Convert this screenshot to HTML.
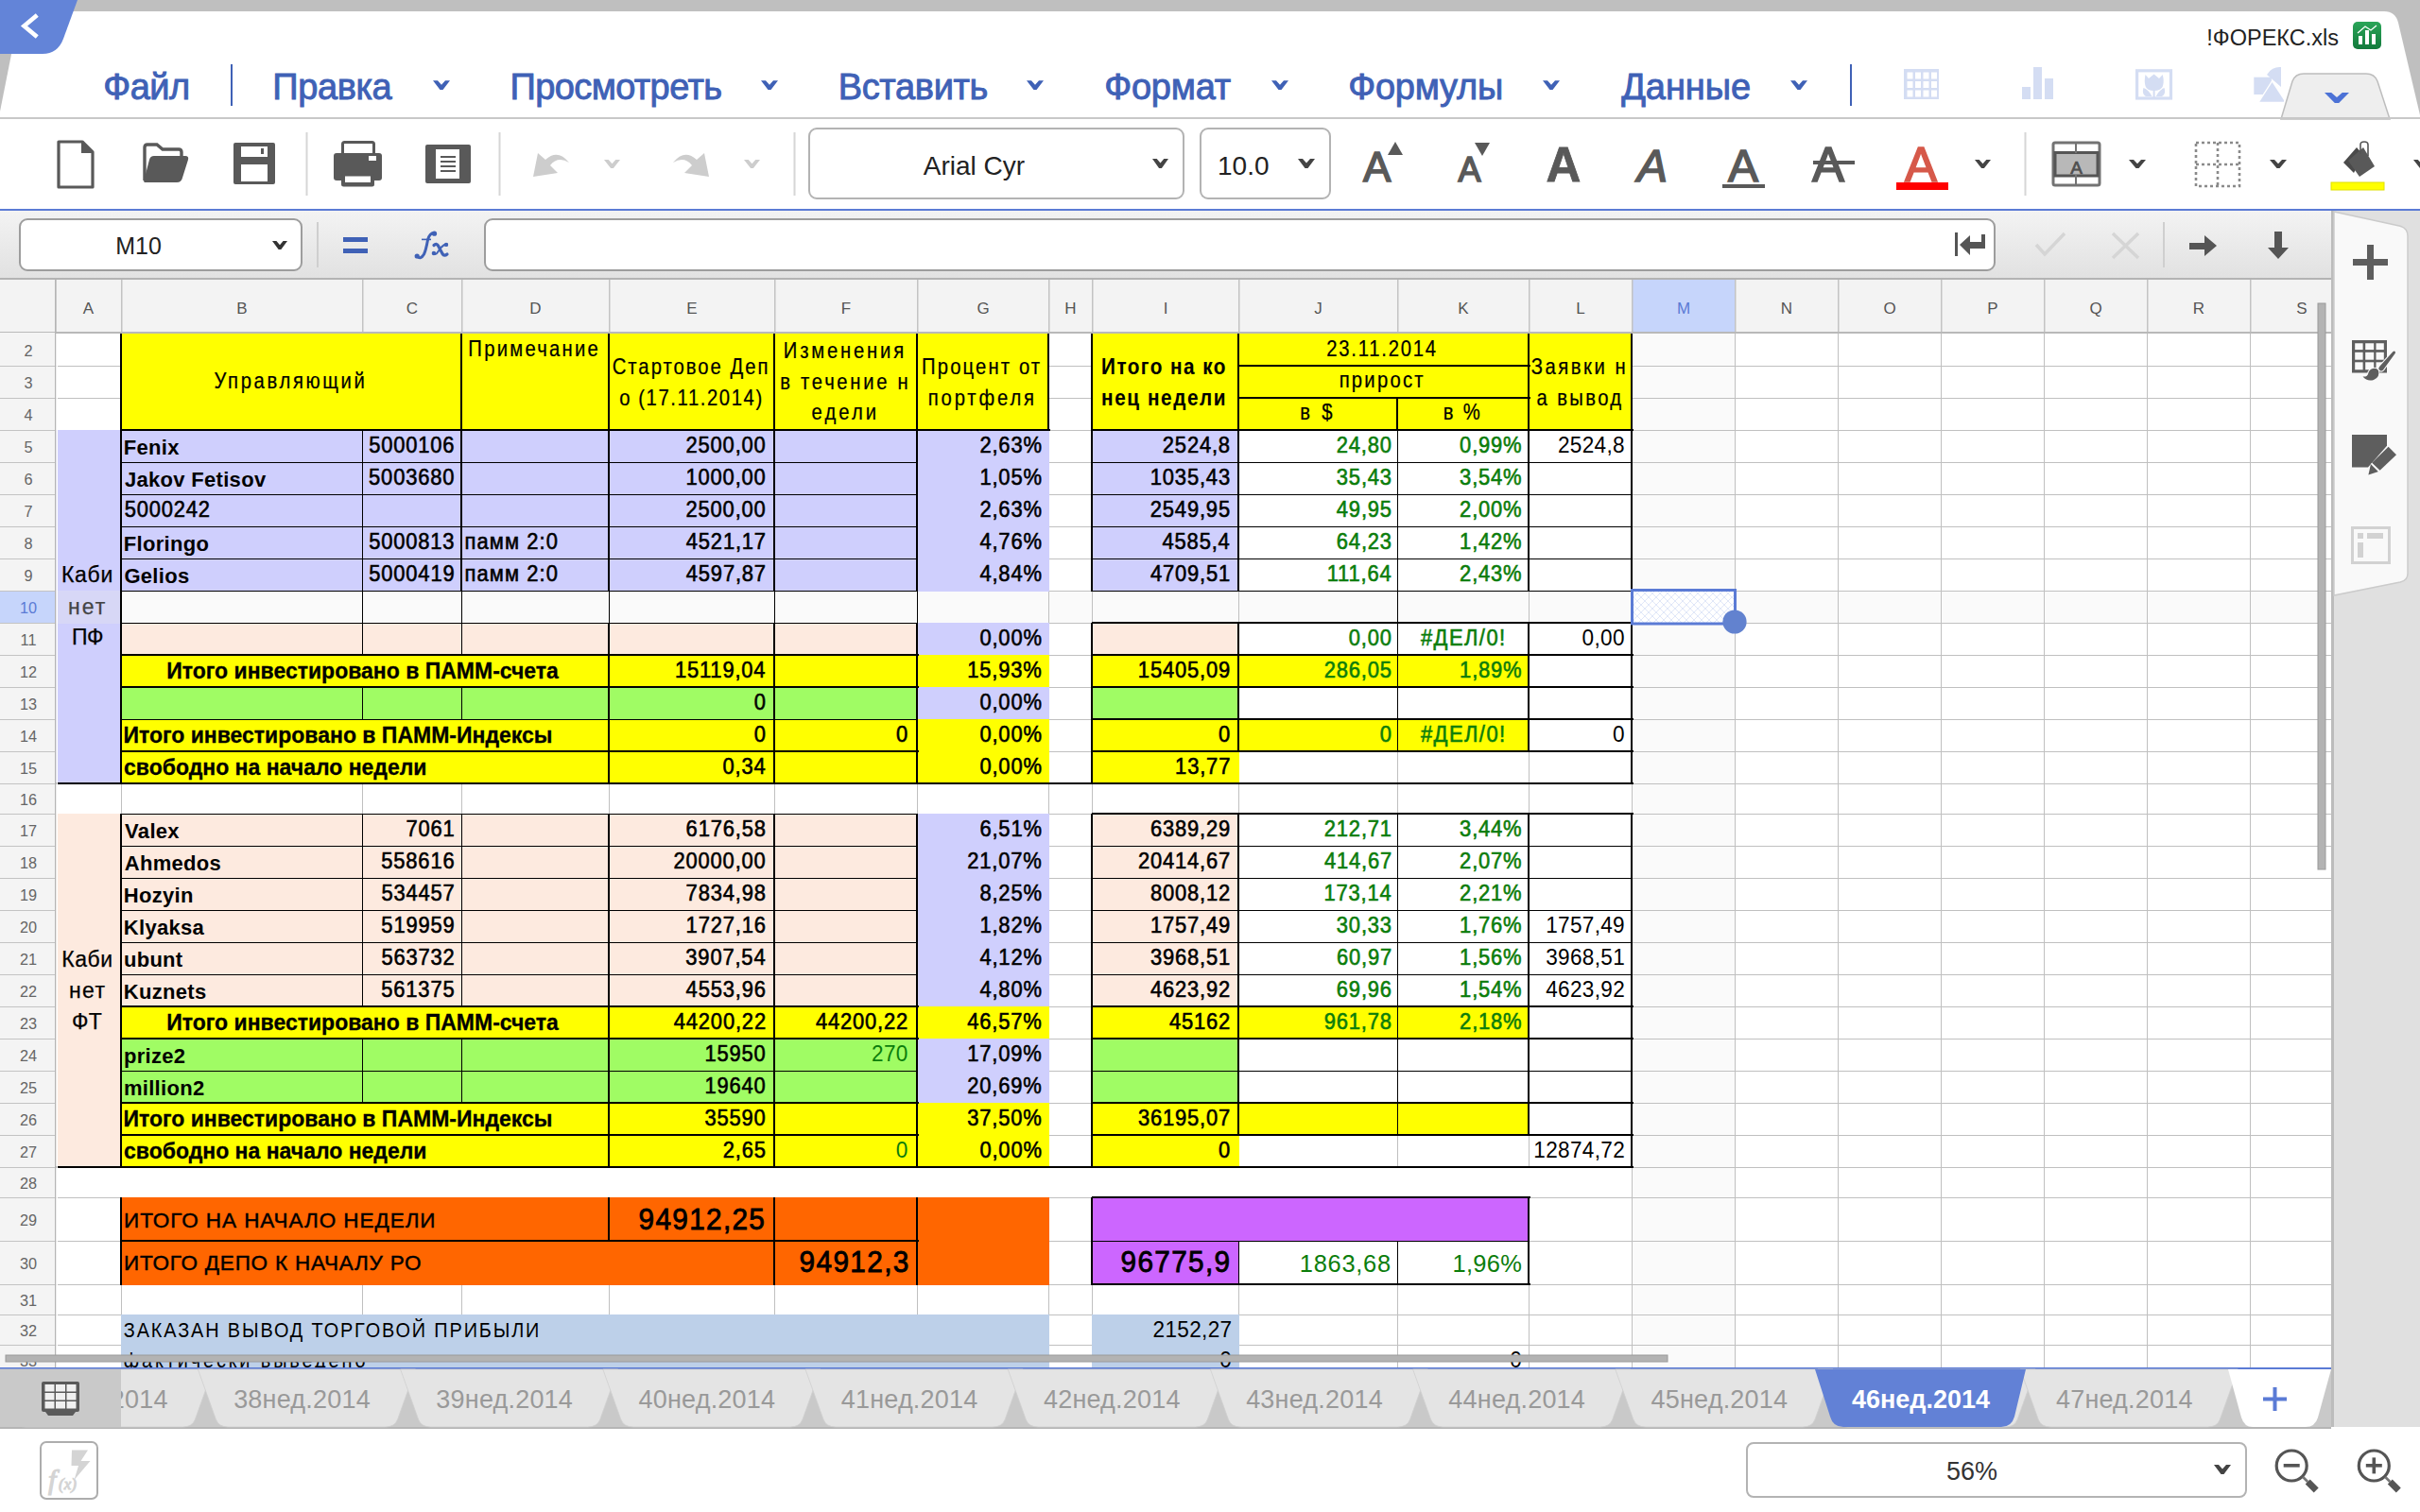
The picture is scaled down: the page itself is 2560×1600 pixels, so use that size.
<!DOCTYPE html><html><head><meta charset="utf-8"><style>html,body{margin:0;padding:0;width:2560px;height:1600px;overflow:hidden;background:#fff}svg{display:block}text{white-space:pre}</style></head><body>
<svg width="2560" height="1600" viewBox="0 0 2560 1600">
<rect x="0" y="0" width="2560" height="126" fill="#bfbfbf"/>
<path d="M21,12 L2522,12 Q2534,12 2537,24 L2561,126 L0,126 L0,118 Z" fill="#ffffff"/>
<path d="M0,0 L82,0 L67,41 Q61,57 45,57 L0,57 Z" fill="#6384d8"/>
<polyline points="37.5,17.5 25.5,27.5 37.5,37.5" fill="none" stroke="#fff" stroke-width="4.6" stroke-linecap="square"/>
<text x="2474" y="48" font-family='"Liberation Sans", sans-serif' font-size="23.5" fill="#222" font-weight="400" letter-spacing="0" text-anchor="end" font-style="normal" >!ФОРЕКС.xls</text>
<defs><linearGradient id="gx" x1="0" y1="0" x2="0" y2="1"><stop offset="0" stop-color="#2aa558"/><stop offset="1" stop-color="#137a3c"/></linearGradient></defs>
<rect x="2489" y="23" width="30" height="29" rx="5" fill="url(#gx)"/>
<rect x="2495" y="38" width="4" height="9" fill="#fff"/><rect x="2502" y="32" width="4" height="15" fill="#fff"/><rect x="2509" y="36" width="4" height="11" fill="#fff"/>
<polyline points="2494,35 2502,28 2508,32 2514,27" fill="none" stroke="#fff" stroke-width="1.3"/>
<text transform="translate(109.25,104.60)" font-family='"Liberation Sans", sans-serif' font-size="38" font-weight="400" font-style="normal" letter-spacing="-0.500" fill="#3f61b6" stroke="#3f61b6" stroke-width="0.9" >Файл</text>
<text transform="translate(288.35,104.60)" font-family='"Liberation Sans", sans-serif' font-size="38" font-weight="400" font-style="normal" letter-spacing="-0.420" fill="#3f61b6" stroke="#3f61b6" stroke-width="0.9" >Правка</text>
<polygon points="458.00,85.20 463.00,85.20 467.00,89.71 471.00,85.20 476.00,85.20 468.50,95.00 465.50,95.00" fill="#3f61b6"/>
<text transform="translate(539.55,104.60)" font-family='"Liberation Sans", sans-serif' font-size="38" font-weight="400" font-style="normal" letter-spacing="-0.620" fill="#3f61b6" stroke="#3f61b6" stroke-width="0.9" >Просмотреть</text>
<polygon points="805.00,85.20 810.00,85.20 814.00,89.71 818.00,85.20 823.00,85.20 815.50,95.00 812.50,95.00" fill="#3f61b6"/>
<text transform="translate(886.65,104.60)" font-family='"Liberation Sans", sans-serif' font-size="38" font-weight="400" font-style="normal" letter-spacing="-0.329" fill="#3f61b6" stroke="#3f61b6" stroke-width="0.9" >Вставить</text>
<polygon points="1086.00,85.20 1091.00,85.20 1095.00,89.71 1099.00,85.20 1104.00,85.20 1096.50,95.00 1093.50,95.00" fill="#3f61b6"/>
<text transform="translate(1168.25,104.60)" font-family='"Liberation Sans", sans-serif' font-size="38" font-weight="400" font-style="normal" letter-spacing="-0.220" fill="#3f61b6" stroke="#3f61b6" stroke-width="0.9" >Формат</text>
<polygon points="1345.00,85.20 1350.00,85.20 1354.00,89.71 1358.00,85.20 1363.00,85.20 1355.50,95.00 1352.50,95.00" fill="#3f61b6"/>
<text transform="translate(1426.25,104.60)" font-family='"Liberation Sans", sans-serif' font-size="38" font-weight="400" font-style="normal" letter-spacing="-0.233" fill="#3f61b6" stroke="#3f61b6" stroke-width="0.9" >Формулы</text>
<polygon points="1632.00,85.20 1637.00,85.20 1641.00,89.71 1645.00,85.20 1650.00,85.20 1642.50,95.00 1639.50,95.00" fill="#3f61b6"/>
<text transform="translate(1715.15,104.60)" font-family='"Liberation Sans", sans-serif' font-size="38" font-weight="400" font-style="normal" letter-spacing="-0.060" fill="#3f61b6" stroke="#3f61b6" stroke-width="0.9" >Данные</text>
<polygon points="1894.00,85.20 1899.00,85.20 1903.00,89.71 1907.00,85.20 1912.00,85.20 1904.50,95.00 1901.50,95.00" fill="#3f61b6"/>
<rect x="244" y="68" width="2" height="44" fill="#3f61b6"/>
<rect x="1957" y="68" width="2" height="44" fill="#3f61b6"/>
<rect x="2014" y="73" width="37" height="32" fill="#d4ddf3"/>
<rect x="2017.5" y="76.5" width="6" height="7" fill="#fff"/>
<rect x="2017.5" y="86.0" width="6" height="7" fill="#fff"/>
<rect x="2017.5" y="95.5" width="6" height="7" fill="#fff"/>
<rect x="2026.0" y="76.5" width="6" height="7" fill="#fff"/>
<rect x="2026.0" y="86.0" width="6" height="7" fill="#fff"/>
<rect x="2026.0" y="95.5" width="6" height="7" fill="#fff"/>
<rect x="2034.5" y="76.5" width="6" height="7" fill="#fff"/>
<rect x="2034.5" y="86.0" width="6" height="7" fill="#fff"/>
<rect x="2034.5" y="95.5" width="6" height="7" fill="#fff"/>
<rect x="2043.0" y="76.5" width="6" height="7" fill="#fff"/>
<rect x="2043.0" y="86.0" width="6" height="7" fill="#fff"/>
<rect x="2043.0" y="95.5" width="6" height="7" fill="#fff"/>
<rect x="2139" y="92" width="9" height="13" fill="#d4ddf3"/><rect x="2151" y="71" width="9" height="34" fill="#d4ddf3"/><rect x="2163" y="83" width="9" height="22" fill="#d4ddf3"/>
<rect x="2260.6" y="74.8" width="35.9" height="29.2" fill="none" stroke="#d4ddf3" stroke-width="3.2"/>
<path d="M2269.5,79 L2273,83 L2278.6,78.5 L2284,83 L2287.8,79 Q2289.5,86 2288,91 Q2286,96 2278.6,96 Q2271,96 2269.5,91 Q2268,86 2269.5,79 Z" fill="#d4ddf3"/>
<rect x="2277.6" y="95" width="2" height="8" fill="#d4ddf3"/>
<path d="M2267.5,93 Q2273,95 2276.5,102 L2270,102 Q2265.5,99 2267.5,93 Z M2289.5,93 Q2284,95 2280.7,102 L2287,102 Q2291.5,99 2289.5,93 Z" fill="#d4ddf3"/>
<path d="M2398,79 A15,15 0 0 1 2413,71 L2413,92 Z" fill="#d4ddf3"/>
<rect x="2384.3" y="81.7" width="18.6" height="18.3" fill="#d4ddf3"/>
<path d="M2403.6,86.9 L2416,106 L2416,107.8 L2390.3,107.8 Z" fill="#d4ddf3" stroke="#fff" stroke-width="2.6" paint-order="stroke"/>
<path d="M2413,126 L2425,86 Q2428,78 2437,78 L2503,78 Q2512,78 2515,86 L2528,126 Z" fill="#eeeeee" stroke="#bdbdbd" stroke-width="1.5"/>
<polygon points="2459.00,98.00 2466.22,98.00 2472.00,103.06 2477.78,98.00 2485.00,98.00 2474.17,109.00 2469.83,109.00" fill="#4c72d6"/>
<rect x="0" y="124" width="2560" height="2" fill="#c8c8c8"/>
<path d="M62,150 L87,150 L98,161 L98,198 L62,198 Z" fill="none" stroke="#595959" stroke-width="3.2" stroke-linejoin="round"/>
<path d="M86,150 L86,162 L98,162 Z" fill="#595959"/>
<path d="M153,191 L153,156 Q153,153 156,153 L166,153 L172,158 L189,158 Q192,158 192,161 L192,166" fill="none" stroke="#595959" stroke-width="3.4"/>
<path d="M152,192 L158,169 Q159,165 163,165 L196,165 Q200,165 199,169 L193,188 Q192,193 187,193 L153,193 Z" fill="#595959"/>
<rect x="247" y="151" width="44" height="44" rx="2" fill="#595959"/>
<rect x="255" y="155" width="28" height="11" fill="#fff"/><rect x="276" y="157" width="3" height="6" fill="#595959"/>
<rect x="255" y="174" width="28" height="18" fill="#fff"/>
<rect x="323.5" y="140" width="2" height="67" fill="#d6d6d6"/>
<rect x="527.5" y="140" width="2" height="67" fill="#d6d6d6"/>
<rect x="839.5" y="140" width="2" height="67" fill="#d6d6d6"/>
<rect x="2141.5" y="140" width="2" height="67" fill="#d6d6d6"/>
<rect x="362.5" y="150.5" width="33" height="14" rx="2" fill="none" stroke="#595959" stroke-width="3"/>
<rect x="353" y="162" width="51" height="29" rx="3" fill="#595959"/>
<rect x="390" y="165" width="8" height="5" fill="#fff"/>
<rect x="361" y="184" width="35" height="13.5" rx="2.5" fill="#595959"/>
<rect x="365" y="186.5" width="27" height="6.5" fill="#fff"/>
<rect x="450" y="153" width="48" height="41" rx="2" fill="#595959"/>
<rect x="461" y="158" width="25" height="31" fill="#fff"/>
<rect x="466" y="165" width="16" height="2" fill="#595959"/>
<rect x="466" y="170" width="16" height="2" fill="#595959"/>
<rect x="466" y="175" width="16" height="2" fill="#595959"/>
<rect x="466" y="180" width="16" height="2" fill="#595959"/>
<path d="M564,187 L569,162 L577,169 Q590,157 602,172 Q590,165 582,175 L590,183 Z" fill="#cdcdcd"/>
<polygon points="639.00,169.00 643.72,169.00 647.50,173.14 651.28,169.00 656.00,169.00 648.92,178.00 646.08,178.00" fill="#cdcdcd"/>
<path d="M750,187 L745,162 L737,169 Q724,157 712,172 Q724,165 732,175 L724,183 Z" fill="#cdcdcd"/>
<polygon points="787.00,169.00 791.72,169.00 795.50,173.14 799.28,169.00 804.00,169.00 796.92,178.00 794.08,178.00" fill="#cdcdcd"/>
<rect x="856" y="136" width="396" height="74" rx="8" fill="#fff" stroke="#b3b3b3" stroke-width="2"/>
<text x="1030.5" y="184.5" font-family='"Liberation Sans", sans-serif' font-size="28" fill="#222" font-weight="400" letter-spacing="0" text-anchor="middle" font-style="normal" >Arial Cyr</text>
<polygon points="1219.00,168.00 1223.72,168.00 1227.50,172.60 1231.28,168.00 1236.00,168.00 1228.92,178.00 1226.08,178.00" fill="#444"/>
<rect x="1270" y="136" width="137" height="74" rx="8" fill="#fff" stroke="#b3b3b3" stroke-width="2"/>
<text x="1288" y="184.5" font-family='"Liberation Sans", sans-serif' font-size="28" fill="#222" font-weight="400" letter-spacing="0" text-anchor="start" font-style="normal" >10.0</text>
<polygon points="1373.00,168.00 1378.00,168.00 1382.00,172.60 1386.00,168.00 1391.00,168.00 1383.50,178.00 1380.50,178.00" fill="#444"/>
<text x="1442" y="192" font-family='"Liberation Sans", sans-serif' font-size="44" fill="#595959" font-weight="400" letter-spacing="0" text-anchor="start" font-style="normal" stroke="#595959" stroke-width="1.6">A</text>
<path d="M1468,164 L1476,150 L1484,164 Z" fill="#595959"/>
<text x="1542.5" y="192" font-family='"Liberation Sans", sans-serif' font-size="36" fill="#595959" font-weight="400" letter-spacing="0" text-anchor="start" font-style="normal" stroke="#595959" stroke-width="1.6">A</text>
<path d="M1560,151 L1576,151 L1568,165 Z" fill="#595959"/>
<text x="1635.5" y="192" font-family='"Liberation Sans", sans-serif' font-size="51" fill="#595959" font-weight="700" letter-spacing="0" text-anchor="start" font-style="normal" stroke="#595959" stroke-width="0.8">A</text>
<text x="1732" y="192" font-family='"Liberation Sans", sans-serif' font-size="48" fill="#595959" font-weight="400" letter-spacing="0" text-anchor="start" font-style="italic" stroke="#595959" stroke-width="1.6">A</text>
<text x="1828" y="192" font-family='"Liberation Sans", sans-serif' font-size="48" fill="#595959" font-weight="400" letter-spacing="0" text-anchor="start" font-style="normal" stroke="#595959" stroke-width="1.6">A</text>
<rect x="1822" y="195" width="45" height="4" fill="#595959"/>
<text x="1917" y="192" font-family='"Liberation Sans", sans-serif' font-size="51" fill="#595959" font-weight="400" letter-spacing="0" text-anchor="start" font-style="normal" stroke="#595959" stroke-width="1.6">A</text>
<rect x="1918" y="170" width="44" height="4" fill="#595959"/>
<text x="2015" y="192" font-family='"Liberation Sans", sans-serif' font-size="51" fill="#d6594a" font-weight="400" letter-spacing="0" text-anchor="start" font-style="normal" stroke="#d6594a" stroke-width="1.6">A</text>
<rect x="2006" y="193" width="55" height="8" fill="#ff0000"/>
<polygon points="2089.00,169.00 2093.72,169.00 2097.50,173.14 2101.28,169.00 2106.00,169.00 2098.92,178.00 2096.08,178.00" fill="#444"/>
<rect x="2172" y="151" width="49" height="45" rx="2" fill="none" stroke="#737373" stroke-width="3"/>
<rect x="2174" y="161.5" width="45" height="24.5" fill="#b8b8b8" stroke="#555555" stroke-width="3"/>
<rect x="2195" y="152" width="2" height="10" fill="#737373"/><rect x="2195" y="185" width="2" height="10" fill="#737373"/>
<text x="2196.5" y="183.5" font-family='"Liberation Sans", sans-serif' font-size="19" fill="#505050" font-weight="400" letter-spacing="0" text-anchor="middle" font-style="normal" stroke="#505050" stroke-width="0.7">A</text>
<polygon points="2252.00,169.00 2257.00,169.00 2261.00,173.14 2265.00,169.00 2270.00,169.00 2262.50,178.00 2259.50,178.00" fill="#444"/>
<rect x="2323" y="151" width="46" height="46" fill="none" stroke="#8a8a8a" stroke-width="2.6" stroke-dasharray="3,3"/>
<line x1="2346" y1="151" x2="2346" y2="197" stroke="#8a8a8a" stroke-width="2.6" stroke-dasharray="3,3"/>
<line x1="2323" y1="174" x2="2369" y2="174" stroke="#8a8a8a" stroke-width="2.6" stroke-dasharray="3,3"/>
<polygon points="2401.00,169.00 2406.00,169.00 2410.00,173.14 2414.00,169.00 2419.00,169.00 2411.50,178.00 2408.50,178.00" fill="#444"/>
<path d="M2479,172 L2493,156 L2500,164 L2490,183 Z" fill="#4a4a4a"/>
<path d="M2484,170 L2500,156 L2512,176 L2496,187 Z" fill="#595959"/>
<path d="M2497,163 L2497,153 Q2497,150 2501,150 Q2505,150 2505,153 L2505,165" fill="none" stroke="#555" stroke-width="1.6"/>
<rect x="2466" y="193" width="56" height="8" fill="#ffff00" stroke="#e0e000" stroke-width="1"/>
<polygon points="2553.00,169.00 2557.72,169.00 2561.50,173.14 2565.28,169.00 2570.00,169.00 2562.92,178.00 2560.08,178.00" fill="#444"/>
<rect x="0" y="221" width="2560" height="2" fill="#5b7bd5"/>
<defs><linearGradient id="gf" x1="0" y1="0" x2="0" y2="1"><stop offset="0" stop-color="#f3f3f3"/><stop offset="1" stop-color="#e1e1e1"/></linearGradient></defs>
<rect x="0" y="223" width="2466" height="72" fill="url(#gf)"/>
<rect x="0" y="294" width="2466" height="2" fill="#b3b3b3"/>
<rect x="21" y="232" width="298" height="54" rx="8" fill="#fff" stroke="#9d9d9d" stroke-width="2"/>
<text x="146.5" y="268.5" font-family='"Liberation Sans", sans-serif' font-size="25" fill="#222" font-weight="400" letter-spacing="0" text-anchor="middle" font-style="normal" >M10</text>
<polygon points="288.00,255.00 292.44,255.00 296.00,259.14 299.56,255.00 304.00,255.00 297.33,264.00 294.67,264.00" fill="#333"/>
<rect x="335" y="235" width="2" height="48" fill="#cfcfcf"/>
<rect x="363" y="251" width="26" height="5" fill="#3f61b6"/><rect x="363" y="263" width="26" height="5" fill="#3f61b6"/>
<path d="M441.5,271.5 Q445,275 448.5,269 Q450.5,265 452.5,254 Q454.5,246.5 459,246.5" fill="none" stroke="#3f61b6" stroke-width="3" stroke-linecap="round"/>
<circle cx="441.2" cy="271" r="2.6" fill="#3f61b6"/><circle cx="459.5" cy="247.2" r="2.6" fill="#3f61b6"/>
<rect x="446" y="252.6" width="10" height="1.6" fill="#3f61b6"/>
<path d="M459,259.5 Q461.5,257 463.5,260 L468,268.5 Q470,271.5 473,269" fill="none" stroke="#3f61b6" stroke-width="3.2" stroke-linecap="round"/>
<path d="M473,258.5 Q470,258 467,261.5 L462.5,267.5 Q461,270 458.8,268" fill="none" stroke="#3f61b6" stroke-width="2" stroke-linecap="round"/>
<circle cx="472" cy="258.9" r="2.2" fill="#3f61b6"/><circle cx="458.9" cy="268" r="2.2" fill="#3f61b6"/>
<rect x="513" y="232" width="1597" height="54" rx="8" fill="#fff" stroke="#9d9d9d" stroke-width="2"/>
<rect x="2068" y="246" width="3" height="25" fill="#555"/>
<path d="M2096,248 L2100,248 L2100,263 L2084,263 L2084,270 L2073,259 L2084,249 L2084,256 L2096,256 Z" fill="#555"/>
<polyline points="2154,259 2163,269 2184,247" fill="none" stroke="#d5d5d5" stroke-width="3.5"/>
<path d="M2235,247 L2262,273 M2262,247 L2235,273" stroke="#d5d5d5" stroke-width="3.5"/>
<rect x="2288" y="235" width="2" height="48" fill="#cfcfcf"/>
<path d="M2316,257 L2332,257 L2332,249 L2345,260 L2332,271 L2332,264 L2316,264 Z" fill="#555"/>
<path d="M2406,245 L2414,245 L2414,262 L2421,262 L2410,274 L2399,262 L2406,262 Z" fill="#555"/>
<defs><clipPath id="shc"><rect x="0" y="296" width="2466" height="1152"/></clipPath><pattern id="hatch" width="8" height="8" patternUnits="userSpaceOnUse"><path d="M0,0 L8,8 M8,0 L0,8" stroke="#e0e7f8" stroke-width="1"/></pattern></defs>
<g clip-path="url(#shc)">
<rect x="0" y="296" width="2466" height="1152" fill="#ffffff"/>
<rect x="1726" y="352" width="109" height="1100" fill="#fafafa"/>
<rect x="58" y="625" width="2408" height="34" fill="#fafafa"/>
<rect x="128" y="352" width="1" height="1100" fill="#c0c0c0"/>
<rect x="383" y="352" width="1" height="1100" fill="#c0c0c0"/>
<rect x="488" y="352" width="1" height="1100" fill="#c0c0c0"/>
<rect x="644" y="352" width="1" height="1100" fill="#c0c0c0"/>
<rect x="819" y="352" width="1" height="1100" fill="#c0c0c0"/>
<rect x="970" y="352" width="1" height="1100" fill="#c0c0c0"/>
<rect x="1109" y="352" width="1" height="1100" fill="#c0c0c0"/>
<rect x="1155" y="352" width="1" height="1100" fill="#c0c0c0"/>
<rect x="1310" y="352" width="1" height="1100" fill="#c0c0c0"/>
<rect x="1478" y="352" width="1" height="1100" fill="#c0c0c0"/>
<rect x="1617" y="352" width="1" height="1100" fill="#c0c0c0"/>
<rect x="1726" y="352" width="1" height="1100" fill="#c0c0c0"/>
<rect x="1835" y="352" width="1" height="1100" fill="#c0c0c0"/>
<rect x="1944" y="352" width="1" height="1100" fill="#c0c0c0"/>
<rect x="2053" y="352" width="1" height="1100" fill="#c0c0c0"/>
<rect x="2162" y="352" width="1" height="1100" fill="#c0c0c0"/>
<rect x="2271" y="352" width="1" height="1100" fill="#c0c0c0"/>
<rect x="2380" y="352" width="1" height="1100" fill="#c0c0c0"/>
<rect x="2489" y="352" width="1" height="1100" fill="#c0c0c0"/>
<rect x="58" y="387" width="2408" height="1" fill="#c0c0c0"/>
<rect x="58" y="421" width="2408" height="1" fill="#c0c0c0"/>
<rect x="58" y="455" width="2408" height="1" fill="#c0c0c0"/>
<rect x="58" y="489" width="2408" height="1" fill="#c0c0c0"/>
<rect x="58" y="523" width="2408" height="1" fill="#c0c0c0"/>
<rect x="58" y="557" width="2408" height="1" fill="#c0c0c0"/>
<rect x="58" y="591" width="2408" height="1" fill="#c0c0c0"/>
<rect x="58" y="625" width="2408" height="1" fill="#c0c0c0"/>
<rect x="58" y="659" width="2408" height="1" fill="#c0c0c0"/>
<rect x="58" y="693" width="2408" height="1" fill="#c0c0c0"/>
<rect x="58" y="727" width="2408" height="1" fill="#c0c0c0"/>
<rect x="58" y="761" width="2408" height="1" fill="#c0c0c0"/>
<rect x="58" y="795" width="2408" height="1" fill="#c0c0c0"/>
<rect x="58" y="829" width="2408" height="1" fill="#c0c0c0"/>
<rect x="58" y="861" width="2408" height="1" fill="#c0c0c0"/>
<rect x="58" y="895" width="2408" height="1" fill="#c0c0c0"/>
<rect x="58" y="929" width="2408" height="1" fill="#c0c0c0"/>
<rect x="58" y="963" width="2408" height="1" fill="#c0c0c0"/>
<rect x="58" y="997" width="2408" height="1" fill="#c0c0c0"/>
<rect x="58" y="1031" width="2408" height="1" fill="#c0c0c0"/>
<rect x="58" y="1065" width="2408" height="1" fill="#c0c0c0"/>
<rect x="58" y="1099" width="2408" height="1" fill="#c0c0c0"/>
<rect x="58" y="1133" width="2408" height="1" fill="#c0c0c0"/>
<rect x="58" y="1167" width="2408" height="1" fill="#c0c0c0"/>
<rect x="58" y="1201" width="2408" height="1" fill="#c0c0c0"/>
<rect x="58" y="1235" width="2408" height="1" fill="#c0c0c0"/>
<rect x="58" y="1267" width="2408" height="1" fill="#c0c0c0"/>
<rect x="58" y="1313" width="2408" height="1" fill="#c0c0c0"/>
<rect x="58" y="1359" width="2408" height="1" fill="#c0c0c0"/>
<rect x="58" y="1391" width="2408" height="1" fill="#c0c0c0"/>
<rect x="58" y="1423" width="2408" height="1" fill="#c0c0c0"/>
<rect x="58" y="1455" width="2408" height="1" fill="#c0c0c0"/>
<rect x="128" y="352" width="982" height="104" fill="#ffff00"/>
<rect x="1155" y="352" width="572" height="104" fill="#ffff00"/>
<rect x="58" y="455" width="71" height="171" fill="#cfcffd"/>
<rect x="58" y="659" width="71" height="171" fill="#cfcffd"/>
<rect x="61" y="455" width="0" height="0"/>
<rect x="128" y="455" width="982" height="35" fill="#cfcffd"/>
<rect x="1155" y="455" width="156" height="35" fill="#cfcffd"/>
<rect x="128" y="489" width="982" height="35" fill="#cfcffd"/>
<rect x="1155" y="489" width="156" height="35" fill="#cfcffd"/>
<rect x="128" y="523" width="982" height="35" fill="#cfcffd"/>
<rect x="1155" y="523" width="156" height="35" fill="#cfcffd"/>
<rect x="128" y="557" width="982" height="35" fill="#cfcffd"/>
<rect x="1155" y="557" width="156" height="35" fill="#cfcffd"/>
<rect x="128" y="591" width="982" height="35" fill="#cfcffd"/>
<rect x="1155" y="591" width="156" height="35" fill="#cfcffd"/>
<rect x="58" y="625" width="71" height="35" fill="#d7d7f6"/>
<rect x="128" y="659" width="843" height="35" fill="#fdeadf"/>
<rect x="970" y="659" width="140" height="35" fill="#cfcffd"/>
<rect x="1155" y="659" width="156" height="35" fill="#fdeadf"/>
<rect x="128" y="693" width="982" height="35" fill="#ffff00"/>
<rect x="1155" y="693" width="463" height="35" fill="#ffff00"/>
<rect x="128" y="727" width="843" height="35" fill="#a0fc64"/>
<rect x="970" y="727" width="140" height="35" fill="#cfcffd"/>
<rect x="1155" y="727" width="156" height="35" fill="#a0fc64"/>
<rect x="128" y="761" width="982" height="35" fill="#ffff00"/>
<rect x="1155" y="761" width="463" height="35" fill="#ffff00"/>
<rect x="128" y="795" width="982" height="35" fill="#ffff00"/>
<rect x="1155" y="795" width="156" height="35" fill="#ffff00"/>
<rect x="58" y="861" width="71" height="375" fill="#fdeadf"/>
<rect x="128" y="861" width="843" height="35" fill="#fdeadf"/>
<rect x="970" y="861" width="140" height="35" fill="#cfcffd"/>
<rect x="1155" y="861" width="156" height="35" fill="#fdeadf"/>
<rect x="128" y="895" width="843" height="35" fill="#fdeadf"/>
<rect x="970" y="895" width="140" height="35" fill="#cfcffd"/>
<rect x="1155" y="895" width="156" height="35" fill="#fdeadf"/>
<rect x="128" y="929" width="843" height="35" fill="#fdeadf"/>
<rect x="970" y="929" width="140" height="35" fill="#cfcffd"/>
<rect x="1155" y="929" width="156" height="35" fill="#fdeadf"/>
<rect x="128" y="963" width="843" height="35" fill="#fdeadf"/>
<rect x="970" y="963" width="140" height="35" fill="#cfcffd"/>
<rect x="1155" y="963" width="156" height="35" fill="#fdeadf"/>
<rect x="128" y="997" width="843" height="35" fill="#fdeadf"/>
<rect x="970" y="997" width="140" height="35" fill="#cfcffd"/>
<rect x="1155" y="997" width="156" height="35" fill="#fdeadf"/>
<rect x="128" y="1031" width="843" height="35" fill="#fdeadf"/>
<rect x="970" y="1031" width="140" height="35" fill="#cfcffd"/>
<rect x="1155" y="1031" width="156" height="35" fill="#fdeadf"/>
<rect x="128" y="1065" width="982" height="35" fill="#ffff00"/>
<rect x="1155" y="1065" width="463" height="35" fill="#ffff00"/>
<rect x="128" y="1099" width="843" height="35" fill="#a0fc64"/>
<rect x="970" y="1099" width="140" height="35" fill="#cfcffd"/>
<rect x="1155" y="1099" width="156" height="35" fill="#a0fc64"/>
<rect x="128" y="1133" width="843" height="35" fill="#a0fc64"/>
<rect x="970" y="1133" width="140" height="35" fill="#cfcffd"/>
<rect x="1155" y="1133" width="156" height="35" fill="#a0fc64"/>
<rect x="128" y="1167" width="982" height="35" fill="#ffff00"/>
<rect x="1155" y="1167" width="463" height="35" fill="#ffff00"/>
<rect x="128" y="1201" width="982" height="35" fill="#ffff00"/>
<rect x="1155" y="1201" width="156" height="35" fill="#ffff00"/>
<rect x="128" y="1267" width="982" height="93" fill="#ff6600"/>
<rect x="1155" y="1267" width="463" height="47" fill="#cc66ff"/>
<rect x="1155" y="1313" width="156" height="47" fill="#cc66ff"/>
<rect x="128" y="1391" width="982" height="65" fill="#bdd0e9"/>
<rect x="1155" y="1391" width="156" height="65" fill="#bdd0e9"/>
<rect x="59" y="1236" width="1667" height="31" fill="#ffffff"/>
<rect x="127" y="352" width="2" height="104" fill="#000"/>
<rect x="487" y="352" width="2" height="104" fill="#000"/>
<rect x="643" y="352" width="2" height="104" fill="#000"/>
<rect x="818" y="352" width="2" height="104" fill="#000"/>
<rect x="969" y="352" width="2" height="104" fill="#000"/>
<rect x="1108" y="352" width="2" height="104" fill="#000"/>
<rect x="1154" y="352" width="2" height="104" fill="#000"/>
<rect x="1309" y="352" width="2" height="104" fill="#000"/>
<rect x="1616" y="352" width="2" height="104" fill="#000"/>
<rect x="1725" y="352" width="2" height="104" fill="#000"/>
<rect x="1477" y="421" width="2" height="35" fill="#000"/>
<rect x="1310" y="386" width="309" height="2" fill="#000"/>
<rect x="1310" y="420" width="309" height="2" fill="#000"/>
<rect x="128" y="454" width="983" height="2" fill="#000"/>
<rect x="1155" y="454" width="573" height="2" fill="#000"/>
<rect x="127" y="455" width="2" height="375" fill="#000"/>
<rect x="383" y="455" width="1" height="35" fill="#000"/>
<rect x="383" y="489" width="1" height="35" fill="#000"/>
<rect x="383" y="523" width="1" height="35" fill="#000"/>
<rect x="383" y="557" width="1" height="35" fill="#000"/>
<rect x="383" y="591" width="1" height="35" fill="#000"/>
<rect x="383" y="625" width="1" height="35" fill="#000"/>
<rect x="383" y="659" width="1" height="35" fill="#000"/>
<rect x="383" y="727" width="1" height="35" fill="#000"/>
<rect x="487" y="455" width="2" height="171" fill="#000"/>
<rect x="488" y="625" width="1" height="69" fill="#000"/>
<rect x="488" y="727" width="1" height="35" fill="#000"/>
<rect x="643" y="455" width="2" height="171" fill="#000"/>
<rect x="644" y="625" width="1" height="35" fill="#000"/>
<rect x="643" y="659" width="2" height="171" fill="#000"/>
<rect x="818" y="455" width="2" height="171" fill="#000"/>
<rect x="819" y="625" width="1" height="35" fill="#000"/>
<rect x="818" y="659" width="2" height="171" fill="#000"/>
<rect x="969" y="455" width="2" height="171" fill="#000"/>
<rect x="970" y="625" width="1" height="35" fill="#000"/>
<rect x="969" y="659" width="2" height="171" fill="#000"/>
<rect x="1154" y="455" width="2" height="171" fill="#000"/>
<rect x="1154" y="659" width="2" height="171" fill="#000"/>
<rect x="1309" y="455" width="2" height="171" fill="#000"/>
<rect x="1309" y="659" width="2" height="137" fill="#000"/>
<rect x="1478" y="455" width="1" height="341" fill="#000"/>
<rect x="1616" y="455" width="2" height="171" fill="#000"/>
<rect x="1616" y="659" width="2" height="137" fill="#000"/>
<rect x="1725" y="455" width="2" height="375" fill="#000"/>
<rect x="128" y="489" width="843" height="1" fill="#000"/>
<rect x="1155" y="489" width="572" height="1" fill="#000"/>
<rect x="128" y="523" width="843" height="1" fill="#000"/>
<rect x="1155" y="523" width="572" height="1" fill="#000"/>
<rect x="128" y="557" width="843" height="1" fill="#000"/>
<rect x="1155" y="557" width="572" height="1" fill="#000"/>
<rect x="128" y="591" width="843" height="1" fill="#000"/>
<rect x="1155" y="591" width="572" height="1" fill="#000"/>
<rect x="128" y="625" width="843" height="1" fill="#000"/>
<rect x="1155" y="625" width="572" height="1" fill="#000"/>
<rect x="128" y="659" width="843" height="1" fill="#000"/>
<rect x="1155" y="659" width="572" height="1" fill="#000"/>
<rect x="1155" y="658" width="573" height="2" fill="#000"/>
<rect x="128" y="692" width="844" height="2" fill="#000"/>
<rect x="1155" y="692" width="573" height="2" fill="#000"/>
<rect x="128" y="726" width="844" height="2" fill="#000"/>
<rect x="1155" y="726" width="573" height="2" fill="#000"/>
<rect x="128" y="794" width="844" height="2" fill="#000"/>
<rect x="1155" y="794" width="573" height="2" fill="#000"/>
<rect x="128" y="761" width="843" height="1" fill="#000"/>
<rect x="1155" y="760" width="573" height="2" fill="#000"/>
<rect x="58" y="828" width="1670" height="2" fill="#000"/>
<rect x="128" y="861" width="843" height="1" fill="#000"/>
<rect x="1155" y="860" width="573" height="2" fill="#000"/>
<rect x="127" y="861" width="2" height="375" fill="#000"/>
<rect x="383" y="861" width="1" height="35" fill="#000"/>
<rect x="488" y="861" width="1" height="35" fill="#000"/>
<rect x="383" y="895" width="1" height="35" fill="#000"/>
<rect x="488" y="895" width="1" height="35" fill="#000"/>
<rect x="383" y="929" width="1" height="35" fill="#000"/>
<rect x="488" y="929" width="1" height="35" fill="#000"/>
<rect x="383" y="963" width="1" height="35" fill="#000"/>
<rect x="488" y="963" width="1" height="35" fill="#000"/>
<rect x="383" y="997" width="1" height="35" fill="#000"/>
<rect x="488" y="997" width="1" height="35" fill="#000"/>
<rect x="383" y="1031" width="1" height="35" fill="#000"/>
<rect x="488" y="1031" width="1" height="35" fill="#000"/>
<rect x="383" y="1099" width="1" height="35" fill="#000"/>
<rect x="488" y="1099" width="1" height="35" fill="#000"/>
<rect x="383" y="1133" width="1" height="35" fill="#000"/>
<rect x="488" y="1133" width="1" height="35" fill="#000"/>
<rect x="643" y="861" width="2" height="375" fill="#000"/>
<rect x="818" y="861" width="2" height="375" fill="#000"/>
<rect x="969" y="861" width="2" height="375" fill="#000"/>
<rect x="1154" y="861" width="2" height="375" fill="#000"/>
<rect x="1309" y="861" width="2" height="341" fill="#000"/>
<rect x="1478" y="861" width="1" height="341" fill="#000"/>
<rect x="1616" y="861" width="2" height="341" fill="#000"/>
<rect x="1725" y="861" width="2" height="375" fill="#000"/>
<rect x="128" y="895" width="843" height="1" fill="#000"/>
<rect x="1155" y="895" width="572" height="1" fill="#000"/>
<rect x="128" y="929" width="843" height="1" fill="#000"/>
<rect x="1155" y="929" width="572" height="1" fill="#000"/>
<rect x="128" y="963" width="843" height="1" fill="#000"/>
<rect x="1155" y="963" width="572" height="1" fill="#000"/>
<rect x="128" y="997" width="843" height="1" fill="#000"/>
<rect x="1155" y="997" width="572" height="1" fill="#000"/>
<rect x="128" y="1031" width="843" height="1" fill="#000"/>
<rect x="1155" y="1031" width="572" height="1" fill="#000"/>
<rect x="128" y="1133" width="843" height="1" fill="#000"/>
<rect x="1155" y="1133" width="572" height="1" fill="#000"/>
<rect x="128" y="1064" width="844" height="2" fill="#000"/>
<rect x="1155" y="1064" width="573" height="2" fill="#000"/>
<rect x="128" y="1098" width="844" height="2" fill="#000"/>
<rect x="1155" y="1098" width="573" height="2" fill="#000"/>
<rect x="128" y="1166" width="844" height="2" fill="#000"/>
<rect x="1155" y="1166" width="573" height="2" fill="#000"/>
<rect x="128" y="1200" width="844" height="2" fill="#000"/>
<rect x="1155" y="1200" width="573" height="2" fill="#000"/>
<rect x="58" y="1234" width="1670" height="2" fill="#000"/>
<rect x="127" y="1267" width="2" height="93" fill="#000"/>
<rect x="643" y="1267" width="2" height="47" fill="#000"/>
<rect x="818" y="1267" width="2" height="93" fill="#000"/>
<rect x="969" y="1267" width="2" height="93" fill="#000"/>
<rect x="128" y="1312" width="844" height="2" fill="#000"/>
<rect x="1155" y="1266" width="464" height="2" fill="#000"/>
<rect x="1155" y="1358" width="464" height="2" fill="#000"/>
<rect x="1155" y="1313" width="463" height="1" fill="#000"/>
<rect x="1154" y="1267" width="2" height="93" fill="#000"/>
<rect x="1616" y="1267" width="2" height="93" fill="#000"/>
<rect x="1310" y="1313" width="1" height="47" fill="#000"/>
<rect x="1478" y="1313" width="1" height="47" fill="#000"/>
<text transform="translate(226.53,411.00) scale(0.8800,1)" font-family='"Liberation Sans", sans-serif' font-size="23" font-weight="400" font-style="normal" letter-spacing="3.005" fill="#000" stroke="#000" stroke-width="0.25" >Управляющий</text>
<text transform="translate(495.34,376.80) scale(0.8800,1)" font-family='"Liberation Sans", sans-serif' font-size="23" font-weight="400" font-style="normal" letter-spacing="2.576" fill="#000" stroke="#000" stroke-width="0.25" >Примечание</text>
<text transform="translate(647.70,395.70) scale(0.8800,1)" font-family='"Liberation Sans", sans-serif' font-size="23" font-weight="400" font-style="normal" letter-spacing="2.284" fill="#000" stroke="#000" stroke-width="0.25" >Стартовое Деп</text>
<text transform="translate(655.13,428.50) scale(0.8800,1)" font-family='"Liberation Sans", sans-serif' font-size="23" font-weight="400" font-style="normal" letter-spacing="1.830" fill="#000" stroke="#000" stroke-width="0.25" >о (17.11.2014)</text>
<text transform="translate(828.79,379.00) scale(0.8800,1)" font-family='"Liberation Sans", sans-serif' font-size="23" font-weight="400" font-style="normal" letter-spacing="3.191" fill="#000" stroke="#000" stroke-width="0.25" >Изменения</text>
<text transform="translate(825.35,411.90) scale(0.8800,1)" font-family='"Liberation Sans", sans-serif' font-size="23" font-weight="400" font-style="normal" letter-spacing="3.065" fill="#000" stroke="#000" stroke-width="0.25" >в течение н</text>
<text transform="translate(858.58,444.00) scale(0.8800,1)" font-family='"Liberation Sans", sans-serif' font-size="23" font-weight="400" font-style="normal" letter-spacing="3.455" fill="#000" stroke="#000" stroke-width="0.25" >едели</text>
<text transform="translate(975.09,395.80) scale(0.8800,1)" font-family='"Liberation Sans", sans-serif' font-size="23" font-weight="400" font-style="normal" letter-spacing="2.429" fill="#000" stroke="#000" stroke-width="0.25" >Процент от</text>
<text transform="translate(981.70,428.50) scale(0.8800,1)" font-family='"Liberation Sans", sans-serif' font-size="23" font-weight="400" font-style="normal" letter-spacing="3.260" fill="#000" stroke="#000" stroke-width="0.25" >портфеля</text>
<text transform="translate(1165.10,395.90) scale(0.9000,1)" font-family='"Liberation Sans", sans-serif' font-size="23" font-weight="700" font-style="normal" letter-spacing="1.626" fill="#000" stroke="#000" stroke-width="0.1" >Итого на ко</text>
<text transform="translate(1165.06,428.90) scale(0.9000,1)" font-family='"Liberation Sans", sans-serif' font-size="23" font-weight="700" font-style="normal" letter-spacing="1.778" fill="#000" stroke="#000" stroke-width="0.1" >нец недели</text>
<text transform="translate(1403.14,376.80) scale(0.8800,1)" font-family='"Liberation Sans", sans-serif' font-size="23" font-weight="400" font-style="normal" letter-spacing="2.042" fill="#000" stroke="#000" stroke-width="0.25" >23.11.2014</text>
<text transform="translate(1416.65,410.40) scale(0.8800,1)" font-family='"Liberation Sans", sans-serif' font-size="23" font-weight="400" font-style="normal" letter-spacing="2.564" fill="#000" stroke="#000" stroke-width="0.25" >прирост</text>
<text transform="translate(1375.35,444.40) scale(0.8800,1)" font-family='"Liberation Sans", sans-serif' font-size="23" font-weight="400" font-style="normal" letter-spacing="3.755" fill="#000" stroke="#000" stroke-width="0.25" >в $</text>
<text transform="translate(1526.70,444.40) scale(0.8800,1)" font-family='"Liberation Sans", sans-serif' font-size="23" font-weight="400" font-style="normal" letter-spacing="2.598" fill="#000" stroke="#000" stroke-width="0.25" >в %</text>
<text transform="translate(1619.71,395.90) scale(0.8800,1)" font-family='"Liberation Sans", sans-serif' font-size="23" font-weight="400" font-style="normal" letter-spacing="2.906" fill="#000" stroke="#000" stroke-width="0.25" >Заявки н</text>
<text transform="translate(1625.48,428.60) scale(0.8800,1)" font-family='"Liberation Sans", sans-serif' font-size="23" font-weight="400" font-style="normal" letter-spacing="2.724" fill="#000" stroke="#000" stroke-width="0.25" >а вывод</text>
<text transform="translate(64.88,616.40)" font-family='"Liberation Sans", sans-serif' font-size="23" font-weight="400" font-style="normal" letter-spacing="0.750" fill="#000" stroke="#000" stroke-width="0.25" >Каби</text>
<text transform="translate(72.12,649.70)" font-family='"Liberation Sans", sans-serif' font-size="23" font-weight="400" font-style="normal" letter-spacing="1.925" fill="#444" stroke="#444" stroke-width="0.25" >нет</text>
<text transform="translate(75.97,682.20)" font-family='"Liberation Sans", sans-serif' font-size="23" font-weight="400" font-style="normal" letter-spacing="-0.550" fill="#000" stroke="#000" stroke-width="0.25" >ПФ</text>
<text transform="translate(65.23,1022.60)" font-family='"Liberation Sans", sans-serif' font-size="23" font-weight="400" font-style="normal" letter-spacing="0.583" fill="#000" stroke="#000" stroke-width="0.25" >Каби</text>
<text transform="translate(72.92,1055.90)" font-family='"Liberation Sans", sans-serif' font-size="23" font-weight="400" font-style="normal" letter-spacing="1.425" fill="#000" stroke="#000" stroke-width="0.25" >нет</text>
<text transform="translate(75.93,1088.60)" font-family='"Liberation Sans", sans-serif' font-size="23" font-weight="400" font-style="normal" letter-spacing="1.550" fill="#000" stroke="#000" stroke-width="0.25" >ФТ</text>
<text transform="translate(130.80,480.80)" font-family='"Liberation Sans", sans-serif' font-size="22" font-weight="700" font-style="normal" letter-spacing="0.300" fill="#000" >Fenix</text>
<text transform="translate(390.16,478.80) scale(0.9300,1)" font-family='"Liberation Sans", sans-serif' font-size="23.6" font-weight="400" font-style="normal" letter-spacing="0.900" fill="#000" stroke="#000" stroke-width="0.6" >5000106</text>
<text transform="translate(725.51,478.80) scale(0.9300,1)" font-family='"Liberation Sans", sans-serif' font-size="23.6" font-weight="400" font-style="normal" letter-spacing="0.900" fill="#000" stroke="#000" stroke-width="0.6" >2500,00</text>
<text transform="translate(1036.40,478.80) scale(0.9300,1)" font-family='"Liberation Sans", sans-serif' font-size="23.6" font-weight="400" font-style="normal" letter-spacing="0.900" fill="#000" stroke="#000" stroke-width="0.6" >2,63%</text>
<text transform="translate(1229.82,478.80) scale(0.9300,1)" font-family='"Liberation Sans", sans-serif' font-size="23.6" font-weight="400" font-style="normal" letter-spacing="0.900" fill="#000" stroke="#000" stroke-width="0.6" >2524,8</text>
<text transform="translate(1413.74,478.80) scale(0.9300,1)" font-family='"Liberation Sans", sans-serif' font-size="23.6" font-weight="400" font-style="normal" letter-spacing="0.900" fill="#0b7d0b" stroke="#0b7d0b" stroke-width="0.6" >24,80</text>
<text transform="translate(1544.10,478.80) scale(0.9300,1)" font-family='"Liberation Sans", sans-serif' font-size="23.6" font-weight="400" font-style="normal" letter-spacing="0.900" fill="#0b7d0b" stroke="#0b7d0b" stroke-width="0.6" >0,99%</text>
<text transform="translate(1647.96,478.80) scale(0.9600,1)" font-family='"Liberation Sans", sans-serif' font-size="23.5" font-weight="400" font-style="normal" letter-spacing="0.350" fill="#000" >2524,8</text>
<text transform="translate(132.00,514.80)" font-family='"Liberation Sans", sans-serif' font-size="22" font-weight="700" font-style="normal" letter-spacing="0.300" fill="#000" >Jakov Fetisov</text>
<text transform="translate(390.07,512.80) scale(0.9300,1)" font-family='"Liberation Sans", sans-serif' font-size="23.6" font-weight="400" font-style="normal" letter-spacing="0.900" fill="#000" stroke="#000" stroke-width="0.6" >5003680</text>
<text transform="translate(725.51,512.80) scale(0.9300,1)" font-family='"Liberation Sans", sans-serif' font-size="23.6" font-weight="400" font-style="normal" letter-spacing="0.900" fill="#000" stroke="#000" stroke-width="0.6" >1000,00</text>
<text transform="translate(1036.40,512.80) scale(0.9300,1)" font-family='"Liberation Sans", sans-serif' font-size="23.6" font-weight="400" font-style="normal" letter-spacing="0.900" fill="#000" stroke="#000" stroke-width="0.6" >1,05%</text>
<text transform="translate(1216.80,512.80) scale(0.9300,1)" font-family='"Liberation Sans", sans-serif' font-size="23.6" font-weight="400" font-style="normal" letter-spacing="0.900" fill="#000" stroke="#000" stroke-width="0.6" >1035,43</text>
<text transform="translate(1413.83,512.80) scale(0.9300,1)" font-family='"Liberation Sans", sans-serif' font-size="23.6" font-weight="400" font-style="normal" letter-spacing="0.900" fill="#0b7d0b" stroke="#0b7d0b" stroke-width="0.6" >35,43</text>
<text transform="translate(1544.10,512.80) scale(0.9300,1)" font-family='"Liberation Sans", sans-serif' font-size="23.6" font-weight="400" font-style="normal" letter-spacing="0.900" fill="#0b7d0b" stroke="#0b7d0b" stroke-width="0.6" >3,54%</text>
<text transform="translate(131.65,546.80) scale(0.9300,1)" font-family='"Liberation Sans", sans-serif' font-size="23.6" font-weight="400" font-style="normal" letter-spacing="0.900" fill="#000" stroke="#000" stroke-width="0.6" >5000242</text>
<text transform="translate(725.51,546.80) scale(0.9300,1)" font-family='"Liberation Sans", sans-serif' font-size="23.6" font-weight="400" font-style="normal" letter-spacing="0.900" fill="#000" stroke="#000" stroke-width="0.6" >2500,00</text>
<text transform="translate(1036.40,546.80) scale(0.9300,1)" font-family='"Liberation Sans", sans-serif' font-size="23.6" font-weight="400" font-style="normal" letter-spacing="0.900" fill="#000" stroke="#000" stroke-width="0.6" >2,63%</text>
<text transform="translate(1216.80,546.80) scale(0.9300,1)" font-family='"Liberation Sans", sans-serif' font-size="23.6" font-weight="400" font-style="normal" letter-spacing="0.900" fill="#000" stroke="#000" stroke-width="0.6" >2549,95</text>
<text transform="translate(1413.83,546.80) scale(0.9300,1)" font-family='"Liberation Sans", sans-serif' font-size="23.6" font-weight="400" font-style="normal" letter-spacing="0.900" fill="#0b7d0b" stroke="#0b7d0b" stroke-width="0.6" >49,95</text>
<text transform="translate(1544.10,546.80) scale(0.9300,1)" font-family='"Liberation Sans", sans-serif' font-size="23.6" font-weight="400" font-style="normal" letter-spacing="0.900" fill="#0b7d0b" stroke="#0b7d0b" stroke-width="0.6" >2,00%</text>
<text transform="translate(130.80,582.80)" font-family='"Liberation Sans", sans-serif' font-size="22" font-weight="700" font-style="normal" letter-spacing="0.300" fill="#000" >Floringo</text>
<text transform="translate(390.16,580.80) scale(0.9300,1)" font-family='"Liberation Sans", sans-serif' font-size="23.6" font-weight="400" font-style="normal" letter-spacing="0.900" fill="#000" stroke="#000" stroke-width="0.6" >5000813</text>
<text transform="translate(491.59,580.80) scale(0.9300,1)" font-family='"Liberation Sans", sans-serif' font-size="23.6" font-weight="400" font-style="normal" letter-spacing="1.153" fill="#000" stroke="#000" stroke-width="0.6" >памм 2:0</text>
<text transform="translate(725.79,580.80) scale(0.9300,1)" font-family='"Liberation Sans", sans-serif' font-size="23.6" font-weight="400" font-style="normal" letter-spacing="0.900" fill="#000" stroke="#000" stroke-width="0.6" >4521,17</text>
<text transform="translate(1036.40,580.80) scale(0.9300,1)" font-family='"Liberation Sans", sans-serif' font-size="23.6" font-weight="400" font-style="normal" letter-spacing="0.900" fill="#000" stroke="#000" stroke-width="0.6" >4,76%</text>
<text transform="translate(1229.54,580.80) scale(0.9300,1)" font-family='"Liberation Sans", sans-serif' font-size="23.6" font-weight="400" font-style="normal" letter-spacing="0.900" fill="#000" stroke="#000" stroke-width="0.6" >4585,4</text>
<text transform="translate(1413.83,580.80) scale(0.9300,1)" font-family='"Liberation Sans", sans-serif' font-size="23.6" font-weight="400" font-style="normal" letter-spacing="0.900" fill="#0b7d0b" stroke="#0b7d0b" stroke-width="0.6" >64,23</text>
<text transform="translate(1544.10,580.80) scale(0.9300,1)" font-family='"Liberation Sans", sans-serif' font-size="23.6" font-weight="400" font-style="normal" letter-spacing="0.900" fill="#0b7d0b" stroke="#0b7d0b" stroke-width="0.6" >1,42%</text>
<text transform="translate(131.40,616.80)" font-family='"Liberation Sans", sans-serif' font-size="22" font-weight="700" font-style="normal" letter-spacing="0.300" fill="#000" >Gelios</text>
<text transform="translate(390.25,614.80) scale(0.9300,1)" font-family='"Liberation Sans", sans-serif' font-size="23.6" font-weight="400" font-style="normal" letter-spacing="0.900" fill="#000" stroke="#000" stroke-width="0.6" >5000419</text>
<text transform="translate(491.59,614.80) scale(0.9300,1)" font-family='"Liberation Sans", sans-serif' font-size="23.6" font-weight="400" font-style="normal" letter-spacing="1.153" fill="#000" stroke="#000" stroke-width="0.6" >памм 2:0</text>
<text transform="translate(725.79,614.80) scale(0.9300,1)" font-family='"Liberation Sans", sans-serif' font-size="23.6" font-weight="400" font-style="normal" letter-spacing="0.900" fill="#000" stroke="#000" stroke-width="0.6" >4597,87</text>
<text transform="translate(1036.40,614.80) scale(0.9300,1)" font-family='"Liberation Sans", sans-serif' font-size="23.6" font-weight="400" font-style="normal" letter-spacing="0.900" fill="#000" stroke="#000" stroke-width="0.6" >4,84%</text>
<text transform="translate(1216.89,614.80) scale(0.9300,1)" font-family='"Liberation Sans", sans-serif' font-size="23.6" font-weight="400" font-style="normal" letter-spacing="0.900" fill="#000" stroke="#000" stroke-width="0.6" >4709,51</text>
<text transform="translate(1403.70,614.80) scale(0.9300,1)" font-family='"Liberation Sans", sans-serif' font-size="23.6" font-weight="400" font-style="normal" letter-spacing="0.900" fill="#0b7d0b" stroke="#0b7d0b" stroke-width="0.6" >111,64</text>
<text transform="translate(1544.10,614.80) scale(0.9300,1)" font-family='"Liberation Sans", sans-serif' font-size="23.6" font-weight="400" font-style="normal" letter-spacing="0.900" fill="#0b7d0b" stroke="#0b7d0b" stroke-width="0.6" >2,43%</text>
<text transform="translate(132.10,886.80)" font-family='"Liberation Sans", sans-serif' font-size="22" font-weight="700" font-style="normal" letter-spacing="0.300" fill="#000" >Valex</text>
<text transform="translate(429.41,884.80) scale(0.9300,1)" font-family='"Liberation Sans", sans-serif' font-size="23.6" font-weight="400" font-style="normal" letter-spacing="0.900" fill="#000" stroke="#000" stroke-width="0.6" >7061</text>
<text transform="translate(725.60,884.80) scale(0.9300,1)" font-family='"Liberation Sans", sans-serif' font-size="23.6" font-weight="400" font-style="normal" letter-spacing="0.900" fill="#000" stroke="#000" stroke-width="0.6" >6176,58</text>
<text transform="translate(1036.40,884.80) scale(0.9300,1)" font-family='"Liberation Sans", sans-serif' font-size="23.6" font-weight="400" font-style="normal" letter-spacing="0.900" fill="#000" stroke="#000" stroke-width="0.6" >6,51%</text>
<text transform="translate(1216.89,884.80) scale(0.9300,1)" font-family='"Liberation Sans", sans-serif' font-size="23.6" font-weight="400" font-style="normal" letter-spacing="0.900" fill="#000" stroke="#000" stroke-width="0.6" >6389,29</text>
<text transform="translate(1400.81,884.80) scale(0.9300,1)" font-family='"Liberation Sans", sans-serif' font-size="23.6" font-weight="400" font-style="normal" letter-spacing="0.900" fill="#0b7d0b" stroke="#0b7d0b" stroke-width="0.6" >212,71</text>
<text transform="translate(1544.10,884.80) scale(0.9300,1)" font-family='"Liberation Sans", sans-serif' font-size="23.6" font-weight="400" font-style="normal" letter-spacing="0.900" fill="#0b7d0b" stroke="#0b7d0b" stroke-width="0.6" >3,44%</text>
<text transform="translate(131.70,920.80)" font-family='"Liberation Sans", sans-serif' font-size="22" font-weight="700" font-style="normal" letter-spacing="0.300" fill="#000" >Ahmedos</text>
<text transform="translate(403.27,918.80) scale(0.9300,1)" font-family='"Liberation Sans", sans-serif' font-size="23.6" font-weight="400" font-style="normal" letter-spacing="0.900" fill="#000" stroke="#000" stroke-width="0.6" >558616</text>
<text transform="translate(712.49,918.80) scale(0.9300,1)" font-family='"Liberation Sans", sans-serif' font-size="23.6" font-weight="400" font-style="normal" letter-spacing="0.900" fill="#000" stroke="#000" stroke-width="0.6" >20000,00</text>
<text transform="translate(1023.29,918.80) scale(0.9300,1)" font-family='"Liberation Sans", sans-serif' font-size="23.6" font-weight="400" font-style="normal" letter-spacing="0.900" fill="#000" stroke="#000" stroke-width="0.6" >21,07%</text>
<text transform="translate(1203.97,918.80) scale(0.9300,1)" font-family='"Liberation Sans", sans-serif' font-size="23.6" font-weight="400" font-style="normal" letter-spacing="0.900" fill="#000" stroke="#000" stroke-width="0.6" >20414,67</text>
<text transform="translate(1400.91,918.80) scale(0.9300,1)" font-family='"Liberation Sans", sans-serif' font-size="23.6" font-weight="400" font-style="normal" letter-spacing="0.900" fill="#0b7d0b" stroke="#0b7d0b" stroke-width="0.6" >414,67</text>
<text transform="translate(1544.10,918.80) scale(0.9300,1)" font-family='"Liberation Sans", sans-serif' font-size="23.6" font-weight="400" font-style="normal" letter-spacing="0.900" fill="#0b7d0b" stroke="#0b7d0b" stroke-width="0.6" >2,07%</text>
<text transform="translate(130.80,954.80)" font-family='"Liberation Sans", sans-serif' font-size="22" font-weight="700" font-style="normal" letter-spacing="0.300" fill="#000" >Hozyin</text>
<text transform="translate(403.46,952.80) scale(0.9300,1)" font-family='"Liberation Sans", sans-serif' font-size="23.6" font-weight="400" font-style="normal" letter-spacing="0.900" fill="#000" stroke="#000" stroke-width="0.6" >534457</text>
<text transform="translate(725.60,952.80) scale(0.9300,1)" font-family='"Liberation Sans", sans-serif' font-size="23.6" font-weight="400" font-style="normal" letter-spacing="0.900" fill="#000" stroke="#000" stroke-width="0.6" >7834,98</text>
<text transform="translate(1036.40,952.80) scale(0.9300,1)" font-family='"Liberation Sans", sans-serif' font-size="23.6" font-weight="400" font-style="normal" letter-spacing="0.900" fill="#000" stroke="#000" stroke-width="0.6" >8,25%</text>
<text transform="translate(1216.99,952.80) scale(0.9300,1)" font-family='"Liberation Sans", sans-serif' font-size="23.6" font-weight="400" font-style="normal" letter-spacing="0.900" fill="#000" stroke="#000" stroke-width="0.6" >8008,12</text>
<text transform="translate(1400.44,952.80) scale(0.9300,1)" font-family='"Liberation Sans", sans-serif' font-size="23.6" font-weight="400" font-style="normal" letter-spacing="0.900" fill="#0b7d0b" stroke="#0b7d0b" stroke-width="0.6" >173,14</text>
<text transform="translate(1544.10,952.80) scale(0.9300,1)" font-family='"Liberation Sans", sans-serif' font-size="23.6" font-weight="400" font-style="normal" letter-spacing="0.900" fill="#0b7d0b" stroke="#0b7d0b" stroke-width="0.6" >2,21%</text>
<text transform="translate(130.80,988.80)" font-family='"Liberation Sans", sans-serif' font-size="22" font-weight="700" font-style="normal" letter-spacing="0.300" fill="#000" >Klyaksa</text>
<text transform="translate(403.37,986.80) scale(0.9300,1)" font-family='"Liberation Sans", sans-serif' font-size="23.6" font-weight="400" font-style="normal" letter-spacing="0.900" fill="#000" stroke="#000" stroke-width="0.6" >519959</text>
<text transform="translate(725.60,986.80) scale(0.9300,1)" font-family='"Liberation Sans", sans-serif' font-size="23.6" font-weight="400" font-style="normal" letter-spacing="0.900" fill="#000" stroke="#000" stroke-width="0.6" >1727,16</text>
<text transform="translate(1036.40,986.80) scale(0.9300,1)" font-family='"Liberation Sans", sans-serif' font-size="23.6" font-weight="400" font-style="normal" letter-spacing="0.900" fill="#000" stroke="#000" stroke-width="0.6" >1,82%</text>
<text transform="translate(1216.89,986.80) scale(0.9300,1)" font-family='"Liberation Sans", sans-serif' font-size="23.6" font-weight="400" font-style="normal" letter-spacing="0.900" fill="#000" stroke="#000" stroke-width="0.6" >1757,49</text>
<text transform="translate(1413.83,986.80) scale(0.9300,1)" font-family='"Liberation Sans", sans-serif' font-size="23.6" font-weight="400" font-style="normal" letter-spacing="0.900" fill="#0b7d0b" stroke="#0b7d0b" stroke-width="0.6" >30,33</text>
<text transform="translate(1544.10,986.80) scale(0.9300,1)" font-family='"Liberation Sans", sans-serif' font-size="23.6" font-weight="400" font-style="normal" letter-spacing="0.900" fill="#0b7d0b" stroke="#0b7d0b" stroke-width="0.6" >1,76%</text>
<text transform="translate(1635.14,986.80) scale(0.9600,1)" font-family='"Liberation Sans", sans-serif' font-size="23.5" font-weight="400" font-style="normal" letter-spacing="0.350" fill="#000" >1757,49</text>
<text transform="translate(130.90,1022.80)" font-family='"Liberation Sans", sans-serif' font-size="22" font-weight="700" font-style="normal" letter-spacing="0.300" fill="#000" >ubunt</text>
<text transform="translate(403.46,1020.80) scale(0.9300,1)" font-family='"Liberation Sans", sans-serif' font-size="23.6" font-weight="400" font-style="normal" letter-spacing="0.900" fill="#000" stroke="#000" stroke-width="0.6" >563732</text>
<text transform="translate(725.32,1020.80) scale(0.9300,1)" font-family='"Liberation Sans", sans-serif' font-size="23.6" font-weight="400" font-style="normal" letter-spacing="0.900" fill="#000" stroke="#000" stroke-width="0.6" >3907,54</text>
<text transform="translate(1036.40,1020.80) scale(0.9300,1)" font-family='"Liberation Sans", sans-serif' font-size="23.6" font-weight="400" font-style="normal" letter-spacing="0.900" fill="#000" stroke="#000" stroke-width="0.6" >4,12%</text>
<text transform="translate(1216.89,1020.80) scale(0.9300,1)" font-family='"Liberation Sans", sans-serif' font-size="23.6" font-weight="400" font-style="normal" letter-spacing="0.900" fill="#000" stroke="#000" stroke-width="0.6" >3968,51</text>
<text transform="translate(1414.02,1020.80) scale(0.9300,1)" font-family='"Liberation Sans", sans-serif' font-size="23.6" font-weight="400" font-style="normal" letter-spacing="0.900" fill="#0b7d0b" stroke="#0b7d0b" stroke-width="0.6" >60,97</text>
<text transform="translate(1544.10,1020.80) scale(0.9300,1)" font-family='"Liberation Sans", sans-serif' font-size="23.6" font-weight="400" font-style="normal" letter-spacing="0.900" fill="#0b7d0b" stroke="#0b7d0b" stroke-width="0.6" >1,56%</text>
<text transform="translate(1635.24,1020.80) scale(0.9600,1)" font-family='"Liberation Sans", sans-serif' font-size="23.5" font-weight="400" font-style="normal" letter-spacing="0.350" fill="#000" >3968,51</text>
<text transform="translate(130.80,1056.80)" font-family='"Liberation Sans", sans-serif' font-size="22" font-weight="700" font-style="normal" letter-spacing="0.300" fill="#000" >Kuznets</text>
<text transform="translate(403.27,1054.80) scale(0.9300,1)" font-family='"Liberation Sans", sans-serif' font-size="23.6" font-weight="400" font-style="normal" letter-spacing="0.900" fill="#000" stroke="#000" stroke-width="0.6" >561375</text>
<text transform="translate(725.60,1054.80) scale(0.9300,1)" font-family='"Liberation Sans", sans-serif' font-size="23.6" font-weight="400" font-style="normal" letter-spacing="0.900" fill="#000" stroke="#000" stroke-width="0.6" >4553,96</text>
<text transform="translate(1036.40,1054.80) scale(0.9300,1)" font-family='"Liberation Sans", sans-serif' font-size="23.6" font-weight="400" font-style="normal" letter-spacing="0.900" fill="#000" stroke="#000" stroke-width="0.6" >4,80%</text>
<text transform="translate(1216.99,1054.80) scale(0.9300,1)" font-family='"Liberation Sans", sans-serif' font-size="23.6" font-weight="400" font-style="normal" letter-spacing="0.900" fill="#000" stroke="#000" stroke-width="0.6" >4623,92</text>
<text transform="translate(1413.83,1054.80) scale(0.9300,1)" font-family='"Liberation Sans", sans-serif' font-size="23.6" font-weight="400" font-style="normal" letter-spacing="0.900" fill="#0b7d0b" stroke="#0b7d0b" stroke-width="0.6" >69,96</text>
<text transform="translate(1544.10,1054.80) scale(0.9300,1)" font-family='"Liberation Sans", sans-serif' font-size="23.6" font-weight="400" font-style="normal" letter-spacing="0.900" fill="#0b7d0b" stroke="#0b7d0b" stroke-width="0.6" >1,54%</text>
<text transform="translate(1635.24,1054.80) scale(0.9600,1)" font-family='"Liberation Sans", sans-serif' font-size="23.5" font-weight="400" font-style="normal" letter-spacing="0.350" fill="#000" >4623,92</text>
<text transform="translate(1036.40,682.80) scale(0.9300,1)" font-family='"Liberation Sans", sans-serif' font-size="23.6" font-weight="400" font-style="normal" letter-spacing="0.900" fill="#000" stroke="#000" stroke-width="0.6" >0,00%</text>
<text transform="translate(1426.76,682.80) scale(0.9300,1)" font-family='"Liberation Sans", sans-serif' font-size="23.6" font-weight="400" font-style="normal" letter-spacing="0.900" fill="#0b7d0b" stroke="#0b7d0b" stroke-width="0.6" >0,00</text>
<text transform="translate(1502.89,682.80) scale(0.9300,1)" font-family='"Liberation Sans", sans-serif' font-size="23.6" font-weight="400" font-style="normal" letter-spacing="1.585" fill="#0b7d0b" stroke="#0b7d0b" stroke-width="0.6" >#ДЕЛ/0!</text>
<text transform="translate(1673.59,682.80) scale(0.9600,1)" font-family='"Liberation Sans", sans-serif' font-size="23.5" font-weight="400" font-style="normal" letter-spacing="0.350" fill="#000" >0,00</text>
<text transform="translate(176.30,717.50)" font-family='"Liberation Sans", sans-serif' font-size="23" font-weight="700" font-style="normal" letter-spacing="0.000" fill="#000" stroke="#000" stroke-width="0.3" >Итого инвестировано в ПАММ-счета</text>
<text transform="translate(713.88,716.80) scale(0.9300,1)" font-family='"Liberation Sans", sans-serif' font-size="23.6" font-weight="400" font-style="normal" letter-spacing="0.900" fill="#000" stroke="#000" stroke-width="0.6" >15119,04</text>
<text transform="translate(1023.29,716.80) scale(0.9300,1)" font-family='"Liberation Sans", sans-serif' font-size="23.6" font-weight="400" font-style="normal" letter-spacing="0.900" fill="#000" stroke="#000" stroke-width="0.6" >15,93%</text>
<text transform="translate(1203.87,716.80) scale(0.9300,1)" font-family='"Liberation Sans", sans-serif' font-size="23.6" font-weight="400" font-style="normal" letter-spacing="0.900" fill="#000" stroke="#000" stroke-width="0.6" >15405,09</text>
<text transform="translate(1400.72,716.80) scale(0.9300,1)" font-family='"Liberation Sans", sans-serif' font-size="23.6" font-weight="400" font-style="normal" letter-spacing="0.900" fill="#0b7d0b" stroke="#0b7d0b" stroke-width="0.6" >286,05</text>
<text transform="translate(1544.10,716.80) scale(0.9300,1)" font-family='"Liberation Sans", sans-serif' font-size="23.6" font-weight="400" font-style="normal" letter-spacing="0.900" fill="#0b7d0b" stroke="#0b7d0b" stroke-width="0.6" >1,89%</text>
<text transform="translate(797.67,750.80) scale(0.9300,1)" font-family='"Liberation Sans", sans-serif' font-size="23.6" font-weight="400" font-style="normal" letter-spacing="0.900" fill="#000" stroke="#000" stroke-width="0.6" >0</text>
<text transform="translate(1036.40,750.80) scale(0.9300,1)" font-family='"Liberation Sans", sans-serif' font-size="23.6" font-weight="400" font-style="normal" letter-spacing="0.900" fill="#000" stroke="#000" stroke-width="0.6" >0,00%</text>
<text transform="translate(130.45,785.50)" font-family='"Liberation Sans", sans-serif' font-size="23" font-weight="700" font-style="normal" letter-spacing="0.000" fill="#000" stroke="#000" stroke-width="0.3" >Итого инвестировано в ПАММ-Индексы</text>
<text transform="translate(797.67,784.80) scale(0.9300,1)" font-family='"Liberation Sans", sans-serif' font-size="23.6" font-weight="400" font-style="normal" letter-spacing="0.900" fill="#000" stroke="#000" stroke-width="0.6" >0</text>
<text transform="translate(947.88,784.80) scale(0.9300,1)" font-family='"Liberation Sans", sans-serif' font-size="23.6" font-weight="400" font-style="normal" letter-spacing="0.900" fill="#000" stroke="#000" stroke-width="0.6" >0</text>
<text transform="translate(1036.40,784.80) scale(0.9300,1)" font-family='"Liberation Sans", sans-serif' font-size="23.6" font-weight="400" font-style="normal" letter-spacing="0.900" fill="#000" stroke="#000" stroke-width="0.6" >0,00%</text>
<text transform="translate(1288.88,784.80) scale(0.9300,1)" font-family='"Liberation Sans", sans-serif' font-size="23.6" font-weight="400" font-style="normal" letter-spacing="0.900" fill="#000" stroke="#000" stroke-width="0.6" >0</text>
<text transform="translate(1459.78,784.80) scale(0.9300,1)" font-family='"Liberation Sans", sans-serif' font-size="23.6" font-weight="400" font-style="normal" letter-spacing="0.900" fill="#0b7d0b" stroke="#0b7d0b" stroke-width="0.6" >0</text>
<text transform="translate(1502.89,784.80) scale(0.9300,1)" font-family='"Liberation Sans", sans-serif' font-size="23.6" font-weight="400" font-style="normal" letter-spacing="1.585" fill="#0b7d0b" stroke="#0b7d0b" stroke-width="0.6" >#ДЕЛ/0!</text>
<text transform="translate(1705.99,784.80) scale(0.9600,1)" font-family='"Liberation Sans", sans-serif' font-size="23.5" font-weight="400" font-style="normal" letter-spacing="0.350" fill="#000" >0</text>
<text transform="translate(131.05,819.50)" font-family='"Liberation Sans", sans-serif' font-size="23" font-weight="700" font-style="normal" letter-spacing="0.000" fill="#000" stroke="#000" stroke-width="0.3" >свободно на начало недели</text>
<text transform="translate(764.47,818.80) scale(0.9300,1)" font-family='"Liberation Sans", sans-serif' font-size="23.6" font-weight="400" font-style="normal" letter-spacing="0.900" fill="#000" stroke="#000" stroke-width="0.6" >0,34</text>
<text transform="translate(1036.40,818.80) scale(0.9300,1)" font-family='"Liberation Sans", sans-serif' font-size="23.6" font-weight="400" font-style="normal" letter-spacing="0.900" fill="#000" stroke="#000" stroke-width="0.6" >0,00%</text>
<text transform="translate(1243.12,818.80) scale(0.9300,1)" font-family='"Liberation Sans", sans-serif' font-size="23.6" font-weight="400" font-style="normal" letter-spacing="0.900" fill="#000" stroke="#000" stroke-width="0.6" >13,77</text>
<text transform="translate(176.30,1089.50)" font-family='"Liberation Sans", sans-serif' font-size="23" font-weight="700" font-style="normal" letter-spacing="0.000" fill="#000" stroke="#000" stroke-width="0.3" >Итого инвестировано в ПАММ-счета</text>
<text transform="translate(712.77,1088.80) scale(0.9300,1)" font-family='"Liberation Sans", sans-serif' font-size="23.6" font-weight="400" font-style="normal" letter-spacing="0.900" fill="#000" stroke="#000" stroke-width="0.6" >44200,22</text>
<text transform="translate(862.97,1088.80) scale(0.9300,1)" font-family='"Liberation Sans", sans-serif' font-size="23.6" font-weight="400" font-style="normal" letter-spacing="0.900" fill="#000" stroke="#000" stroke-width="0.6" >44200,22</text>
<text transform="translate(1023.29,1088.80) scale(0.9300,1)" font-family='"Liberation Sans", sans-serif' font-size="23.6" font-weight="400" font-style="normal" letter-spacing="0.900" fill="#000" stroke="#000" stroke-width="0.6" >46,57%</text>
<text transform="translate(1236.98,1088.80) scale(0.9300,1)" font-family='"Liberation Sans", sans-serif' font-size="23.6" font-weight="400" font-style="normal" letter-spacing="0.900" fill="#000" stroke="#000" stroke-width="0.6" >45162</text>
<text transform="translate(1400.72,1088.80) scale(0.9300,1)" font-family='"Liberation Sans", sans-serif' font-size="23.6" font-weight="400" font-style="normal" letter-spacing="0.900" fill="#0b7d0b" stroke="#0b7d0b" stroke-width="0.6" >961,78</text>
<text transform="translate(1544.10,1088.80) scale(0.9300,1)" font-family='"Liberation Sans", sans-serif' font-size="23.6" font-weight="400" font-style="normal" letter-spacing="0.900" fill="#0b7d0b" stroke="#0b7d0b" stroke-width="0.6" >2,18%</text>
<text transform="translate(130.90,1124.80)" font-family='"Liberation Sans", sans-serif' font-size="22" font-weight="700" font-style="normal" letter-spacing="0.300" fill="#000" >prize2</text>
<text transform="translate(745.50,1122.80) scale(0.9300,1)" font-family='"Liberation Sans", sans-serif' font-size="23.6" font-weight="400" font-style="normal" letter-spacing="0.900" fill="#000" stroke="#000" stroke-width="0.6" >15950</text>
<text transform="translate(922.06,1122.80) scale(0.9600,1)" font-family='"Liberation Sans", sans-serif' font-size="23.5" font-weight="400" font-style="normal" letter-spacing="0.350" fill="#0b7d0b" >270</text>
<text transform="translate(1023.29,1122.80) scale(0.9300,1)" font-family='"Liberation Sans", sans-serif' font-size="23.6" font-weight="400" font-style="normal" letter-spacing="0.900" fill="#000" stroke="#000" stroke-width="0.6" >17,09%</text>
<text transform="translate(130.90,1158.80)" font-family='"Liberation Sans", sans-serif' font-size="22" font-weight="700" font-style="normal" letter-spacing="0.300" fill="#000" >million2</text>
<text transform="translate(745.50,1156.80) scale(0.9300,1)" font-family='"Liberation Sans", sans-serif' font-size="23.6" font-weight="400" font-style="normal" letter-spacing="0.900" fill="#000" stroke="#000" stroke-width="0.6" >19640</text>
<text transform="translate(1023.29,1156.80) scale(0.9300,1)" font-family='"Liberation Sans", sans-serif' font-size="23.6" font-weight="400" font-style="normal" letter-spacing="0.900" fill="#000" stroke="#000" stroke-width="0.6" >20,69%</text>
<text transform="translate(130.45,1191.50)" font-family='"Liberation Sans", sans-serif' font-size="23" font-weight="700" font-style="normal" letter-spacing="0.000" fill="#000" stroke="#000" stroke-width="0.3" >Итого инвестировано в ПАММ-Индексы</text>
<text transform="translate(745.50,1190.80) scale(0.9300,1)" font-family='"Liberation Sans", sans-serif' font-size="23.6" font-weight="400" font-style="normal" letter-spacing="0.900" fill="#000" stroke="#000" stroke-width="0.6" >35590</text>
<text transform="translate(1023.29,1190.80) scale(0.9300,1)" font-family='"Liberation Sans", sans-serif' font-size="23.6" font-weight="400" font-style="normal" letter-spacing="0.900" fill="#000" stroke="#000" stroke-width="0.6" >37,50%</text>
<text transform="translate(1203.97,1190.80) scale(0.9300,1)" font-family='"Liberation Sans", sans-serif' font-size="23.6" font-weight="400" font-style="normal" letter-spacing="0.900" fill="#000" stroke="#000" stroke-width="0.6" >36195,07</text>
<text transform="translate(131.05,1225.50)" font-family='"Liberation Sans", sans-serif' font-size="23" font-weight="700" font-style="normal" letter-spacing="0.000" fill="#000" stroke="#000" stroke-width="0.3" >свободно на начало недели</text>
<text transform="translate(764.75,1224.80) scale(0.9300,1)" font-family='"Liberation Sans", sans-serif' font-size="23.6" font-weight="400" font-style="normal" letter-spacing="0.900" fill="#000" stroke="#000" stroke-width="0.6" >2,65</text>
<text transform="translate(947.79,1224.80) scale(0.9600,1)" font-family='"Liberation Sans", sans-serif' font-size="23.5" font-weight="400" font-style="normal" letter-spacing="0.350" fill="#0b7d0b" >0</text>
<text transform="translate(1036.40,1224.80) scale(0.9300,1)" font-family='"Liberation Sans", sans-serif' font-size="23.6" font-weight="400" font-style="normal" letter-spacing="0.900" fill="#000" stroke="#000" stroke-width="0.6" >0,00%</text>
<text transform="translate(1288.88,1224.80) scale(0.9300,1)" font-family='"Liberation Sans", sans-serif' font-size="23.6" font-weight="400" font-style="normal" letter-spacing="0.900" fill="#000" stroke="#000" stroke-width="0.6" >0</text>
<text transform="translate(1622.32,1224.80) scale(0.9600,1)" font-family='"Liberation Sans", sans-serif' font-size="23.5" font-weight="400" font-style="normal" letter-spacing="0.350" fill="#000" >12874,72</text>
<text transform="translate(131.03,1299.00)" font-family='"Liberation Sans", sans-serif' font-size="22.5" font-weight="400" font-style="normal" letter-spacing="0.950" fill="#000" stroke="#000" stroke-width="0.45" >ИТОГО НА НАЧАЛО НЕДЕЛИ</text>
<text transform="translate(131.03,1344.40)" font-family='"Liberation Sans", sans-serif' font-size="22.5" font-weight="400" font-style="normal" letter-spacing="0.788" fill="#000" stroke="#000" stroke-width="0.45" >ИТОГО ДЕПО К НАЧАЛУ РО</text>
<text transform="translate(675.62,1300.60) scale(0.9300,1)" font-family='"Liberation Sans", sans-serif' font-size="32" font-weight="400" font-style="normal" letter-spacing="1.415" fill="#000" stroke="#000" stroke-width="0.9" >94912,25</text>
<text transform="translate(845.62,1346.20) scale(0.9300,1)" font-family='"Liberation Sans", sans-serif' font-size="32" font-weight="400" font-style="normal" letter-spacing="1.462" fill="#000" stroke="#000" stroke-width="0.9" >94912,3</text>
<text transform="translate(1185.52,1346.00) scale(0.9300,1)" font-family='"Liberation Sans", sans-serif' font-size="32" font-weight="400" font-style="normal" letter-spacing="1.425" fill="#000" stroke="#000" stroke-width="0.9" >96775,9</text>
<text transform="translate(1374.78,1346.20) scale(0.9600,1)" font-family='"Liberation Sans", sans-serif' font-size="26.5" font-weight="400" font-style="normal" letter-spacing="0.765" fill="#0b7d0b" >1863,68</text>
<text transform="translate(1536.48,1346.20) scale(0.9600,1)" font-family='"Liberation Sans", sans-serif' font-size="26.5" font-weight="400" font-style="normal" letter-spacing="0.335" fill="#0b7d0b" >1,96%</text>
<text transform="translate(130.80,1414.70) scale(0.8800,1)" font-family='"Liberation Sans", sans-serif' font-size="22.6" font-weight="400" font-style="normal" letter-spacing="2.137" fill="#000" >ЗАКАЗАН ВЫВОД ТОРГОВОЙ ПРИБЫЛИ</text>
<text transform="translate(1219.54,1414.70) scale(0.9600,1)" font-family='"Liberation Sans", sans-serif' font-size="23.5" font-weight="400" font-style="normal" letter-spacing="0.350" fill="#000" >2152,27</text>
<text transform="translate(130.71,1447.00) scale(0.8800,1)" font-family='"Liberation Sans", sans-serif' font-size="22.6" font-weight="400" font-style="normal" letter-spacing="3.293" fill="#000" >фактически выведено</text>
<text transform="translate(1290.29,1447.00) scale(0.9600,1)" font-family='"Liberation Sans", sans-serif' font-size="23.5" font-weight="400" font-style="normal" letter-spacing="0.350" fill="#000" >0</text>
<text transform="translate(1597.29,1447.00) scale(0.9600,1)" font-family='"Liberation Sans", sans-serif' font-size="23.5" font-weight="400" font-style="normal" letter-spacing="0.350" fill="#000" >0</text>
<rect x="1727" y="626" width="108" height="33" fill="#ffffff"/>
<rect x="1727" y="626" width="108" height="33" fill="url(#hatch)"/>
<rect x="1726.5" y="624.5" width="109" height="35.5" fill="none" stroke="#5b7bd5" stroke-width="3"/>
<circle cx="1835" cy="658" r="12.6" fill="#6282cf"/>
<rect x="0" y="296" width="2466" height="56" fill="#f3f3f3"/>
<rect x="1726" y="296" width="109" height="56" fill="#c6d5fb"/>
<rect x="58" y="296" width="1.5" height="56" fill="#c3c3c3"/>
<rect x="128" y="296" width="1.5" height="56" fill="#c3c3c3"/>
<rect x="383" y="296" width="1.5" height="56" fill="#c3c3c3"/>
<rect x="488" y="296" width="1.5" height="56" fill="#c3c3c3"/>
<rect x="644" y="296" width="1.5" height="56" fill="#c3c3c3"/>
<rect x="819" y="296" width="1.5" height="56" fill="#c3c3c3"/>
<rect x="970" y="296" width="1.5" height="56" fill="#c3c3c3"/>
<rect x="1109" y="296" width="1.5" height="56" fill="#c3c3c3"/>
<rect x="1155" y="296" width="1.5" height="56" fill="#c3c3c3"/>
<rect x="1310" y="296" width="1.5" height="56" fill="#c3c3c3"/>
<rect x="1478" y="296" width="1.5" height="56" fill="#c3c3c3"/>
<rect x="1617" y="296" width="1.5" height="56" fill="#c3c3c3"/>
<rect x="1726" y="296" width="1.5" height="56" fill="#c3c3c3"/>
<rect x="1835" y="296" width="1.5" height="56" fill="#c3c3c3"/>
<rect x="1944" y="296" width="1.5" height="56" fill="#c3c3c3"/>
<rect x="2053" y="296" width="1.5" height="56" fill="#c3c3c3"/>
<rect x="2162" y="296" width="1.5" height="56" fill="#c3c3c3"/>
<rect x="2271" y="296" width="1.5" height="56" fill="#c3c3c3"/>
<rect x="2380" y="296" width="1.5" height="56" fill="#c3c3c3"/>
<rect x="2489" y="296" width="1.5" height="56" fill="#c3c3c3"/>
<rect x="0" y="351" width="2466" height="2" fill="#b9b9b9"/>
<text x="93.5" y="332" font-family='"Liberation Sans", sans-serif' font-size="17" fill="#555" font-weight="400" letter-spacing="0" text-anchor="middle" font-style="normal" >A</text>
<text x="256.0" y="332" font-family='"Liberation Sans", sans-serif' font-size="17" fill="#555" font-weight="400" letter-spacing="0" text-anchor="middle" font-style="normal" >B</text>
<text x="436.0" y="332" font-family='"Liberation Sans", sans-serif' font-size="17" fill="#555" font-weight="400" letter-spacing="0" text-anchor="middle" font-style="normal" >C</text>
<text x="566.5" y="332" font-family='"Liberation Sans", sans-serif' font-size="17" fill="#555" font-weight="400" letter-spacing="0" text-anchor="middle" font-style="normal" >D</text>
<text x="732.0" y="332" font-family='"Liberation Sans", sans-serif' font-size="17" fill="#555" font-weight="400" letter-spacing="0" text-anchor="middle" font-style="normal" >E</text>
<text x="895.0" y="332" font-family='"Liberation Sans", sans-serif' font-size="17" fill="#555" font-weight="400" letter-spacing="0" text-anchor="middle" font-style="normal" >F</text>
<text x="1040.0" y="332" font-family='"Liberation Sans", sans-serif' font-size="17" fill="#555" font-weight="400" letter-spacing="0" text-anchor="middle" font-style="normal" >G</text>
<text x="1132.5" y="332" font-family='"Liberation Sans", sans-serif' font-size="17" fill="#555" font-weight="400" letter-spacing="0" text-anchor="middle" font-style="normal" >H</text>
<text x="1233.0" y="332" font-family='"Liberation Sans", sans-serif' font-size="17" fill="#555" font-weight="400" letter-spacing="0" text-anchor="middle" font-style="normal" >I</text>
<text x="1394.5" y="332" font-family='"Liberation Sans", sans-serif' font-size="17" fill="#555" font-weight="400" letter-spacing="0" text-anchor="middle" font-style="normal" >J</text>
<text x="1548.0" y="332" font-family='"Liberation Sans", sans-serif' font-size="17" fill="#555" font-weight="400" letter-spacing="0" text-anchor="middle" font-style="normal" >K</text>
<text x="1672.0" y="332" font-family='"Liberation Sans", sans-serif' font-size="17" fill="#555" font-weight="400" letter-spacing="0" text-anchor="middle" font-style="normal" >L</text>
<text x="1781.0" y="332" font-family='"Liberation Sans", sans-serif' font-size="17" fill="#5b7bd5" font-weight="400" letter-spacing="0" text-anchor="middle" font-style="normal" >M</text>
<text x="1890.0" y="332" font-family='"Liberation Sans", sans-serif' font-size="17" fill="#555" font-weight="400" letter-spacing="0" text-anchor="middle" font-style="normal" >N</text>
<text x="1999.0" y="332" font-family='"Liberation Sans", sans-serif' font-size="17" fill="#555" font-weight="400" letter-spacing="0" text-anchor="middle" font-style="normal" >O</text>
<text x="2108.0" y="332" font-family='"Liberation Sans", sans-serif' font-size="17" fill="#555" font-weight="400" letter-spacing="0" text-anchor="middle" font-style="normal" >P</text>
<text x="2217.0" y="332" font-family='"Liberation Sans", sans-serif' font-size="17" fill="#555" font-weight="400" letter-spacing="0" text-anchor="middle" font-style="normal" >Q</text>
<text x="2326.0" y="332" font-family='"Liberation Sans", sans-serif' font-size="17" fill="#555" font-weight="400" letter-spacing="0" text-anchor="middle" font-style="normal" >R</text>
<text x="2435.0" y="332" font-family='"Liberation Sans", sans-serif' font-size="17" fill="#555" font-weight="400" letter-spacing="0" text-anchor="middle" font-style="normal" >S</text>
<rect x="0" y="352" width="58" height="1100" fill="#f4f4f4"/>
<rect x="0" y="625" width="58" height="34" fill="#c6d5fb"/>
<rect x="58" y="296" width="1.5" height="1156" fill="#b5b5b5"/>
<rect x="0" y="387" width="58" height="1" fill="#c3c3c3"/>
<text x="30" y="376.7" font-family='"Liberation Sans", sans-serif' font-size="16.3" fill="#666" font-weight="400" letter-spacing="0" text-anchor="middle" font-style="normal" >2</text>
<rect x="0" y="421" width="58" height="1" fill="#c3c3c3"/>
<text x="30" y="411.2" font-family='"Liberation Sans", sans-serif' font-size="16.3" fill="#666" font-weight="400" letter-spacing="0" text-anchor="middle" font-style="normal" >3</text>
<rect x="0" y="455" width="58" height="1" fill="#c3c3c3"/>
<text x="30" y="445.2" font-family='"Liberation Sans", sans-serif' font-size="16.3" fill="#666" font-weight="400" letter-spacing="0" text-anchor="middle" font-style="normal" >4</text>
<rect x="0" y="489" width="58" height="1" fill="#c3c3c3"/>
<text x="30" y="479.2" font-family='"Liberation Sans", sans-serif' font-size="16.3" fill="#666" font-weight="400" letter-spacing="0" text-anchor="middle" font-style="normal" >5</text>
<rect x="0" y="523" width="58" height="1" fill="#c3c3c3"/>
<text x="30" y="513.2" font-family='"Liberation Sans", sans-serif' font-size="16.3" fill="#666" font-weight="400" letter-spacing="0" text-anchor="middle" font-style="normal" >6</text>
<rect x="0" y="557" width="58" height="1" fill="#c3c3c3"/>
<text x="30" y="547.2" font-family='"Liberation Sans", sans-serif' font-size="16.3" fill="#666" font-weight="400" letter-spacing="0" text-anchor="middle" font-style="normal" >7</text>
<rect x="0" y="591" width="58" height="1" fill="#c3c3c3"/>
<text x="30" y="581.2" font-family='"Liberation Sans", sans-serif' font-size="16.3" fill="#666" font-weight="400" letter-spacing="0" text-anchor="middle" font-style="normal" >8</text>
<rect x="0" y="625" width="58" height="1" fill="#c3c3c3"/>
<text x="30" y="615.2" font-family='"Liberation Sans", sans-serif' font-size="16.3" fill="#666" font-weight="400" letter-spacing="0" text-anchor="middle" font-style="normal" >9</text>
<rect x="0" y="659" width="58" height="1" fill="#c3c3c3"/>
<text x="30" y="649.2" font-family='"Liberation Sans", sans-serif' font-size="16.3" fill="#5b7bd5" font-weight="400" letter-spacing="0" text-anchor="middle" font-style="normal" >10</text>
<rect x="0" y="693" width="58" height="1" fill="#c3c3c3"/>
<text x="30" y="683.2" font-family='"Liberation Sans", sans-serif' font-size="16.3" fill="#666" font-weight="400" letter-spacing="0" text-anchor="middle" font-style="normal" >11</text>
<rect x="0" y="727" width="58" height="1" fill="#c3c3c3"/>
<text x="30" y="717.2" font-family='"Liberation Sans", sans-serif' font-size="16.3" fill="#666" font-weight="400" letter-spacing="0" text-anchor="middle" font-style="normal" >12</text>
<rect x="0" y="761" width="58" height="1" fill="#c3c3c3"/>
<text x="30" y="751.2" font-family='"Liberation Sans", sans-serif' font-size="16.3" fill="#666" font-weight="400" letter-spacing="0" text-anchor="middle" font-style="normal" >13</text>
<rect x="0" y="795" width="58" height="1" fill="#c3c3c3"/>
<text x="30" y="785.2" font-family='"Liberation Sans", sans-serif' font-size="16.3" fill="#666" font-weight="400" letter-spacing="0" text-anchor="middle" font-style="normal" >14</text>
<rect x="0" y="829" width="58" height="1" fill="#c3c3c3"/>
<text x="30" y="819.2" font-family='"Liberation Sans", sans-serif' font-size="16.3" fill="#666" font-weight="400" letter-spacing="0" text-anchor="middle" font-style="normal" >15</text>
<rect x="0" y="861" width="58" height="1" fill="#c3c3c3"/>
<text x="30" y="852.2" font-family='"Liberation Sans", sans-serif' font-size="16.3" fill="#666" font-weight="400" letter-spacing="0" text-anchor="middle" font-style="normal" >16</text>
<rect x="0" y="895" width="58" height="1" fill="#c3c3c3"/>
<text x="30" y="885.2" font-family='"Liberation Sans", sans-serif' font-size="16.3" fill="#666" font-weight="400" letter-spacing="0" text-anchor="middle" font-style="normal" >17</text>
<rect x="0" y="929" width="58" height="1" fill="#c3c3c3"/>
<text x="30" y="919.2" font-family='"Liberation Sans", sans-serif' font-size="16.3" fill="#666" font-weight="400" letter-spacing="0" text-anchor="middle" font-style="normal" >18</text>
<rect x="0" y="963" width="58" height="1" fill="#c3c3c3"/>
<text x="30" y="953.2" font-family='"Liberation Sans", sans-serif' font-size="16.3" fill="#666" font-weight="400" letter-spacing="0" text-anchor="middle" font-style="normal" >19</text>
<rect x="0" y="997" width="58" height="1" fill="#c3c3c3"/>
<text x="30" y="987.2" font-family='"Liberation Sans", sans-serif' font-size="16.3" fill="#666" font-weight="400" letter-spacing="0" text-anchor="middle" font-style="normal" >20</text>
<rect x="0" y="1031" width="58" height="1" fill="#c3c3c3"/>
<text x="30" y="1021.2" font-family='"Liberation Sans", sans-serif' font-size="16.3" fill="#666" font-weight="400" letter-spacing="0" text-anchor="middle" font-style="normal" >21</text>
<rect x="0" y="1065" width="58" height="1" fill="#c3c3c3"/>
<text x="30" y="1055.2" font-family='"Liberation Sans", sans-serif' font-size="16.3" fill="#666" font-weight="400" letter-spacing="0" text-anchor="middle" font-style="normal" >22</text>
<rect x="0" y="1099" width="58" height="1" fill="#c3c3c3"/>
<text x="30" y="1089.2" font-family='"Liberation Sans", sans-serif' font-size="16.3" fill="#666" font-weight="400" letter-spacing="0" text-anchor="middle" font-style="normal" >23</text>
<rect x="0" y="1133" width="58" height="1" fill="#c3c3c3"/>
<text x="30" y="1123.2" font-family='"Liberation Sans", sans-serif' font-size="16.3" fill="#666" font-weight="400" letter-spacing="0" text-anchor="middle" font-style="normal" >24</text>
<rect x="0" y="1167" width="58" height="1" fill="#c3c3c3"/>
<text x="30" y="1157.2" font-family='"Liberation Sans", sans-serif' font-size="16.3" fill="#666" font-weight="400" letter-spacing="0" text-anchor="middle" font-style="normal" >25</text>
<rect x="0" y="1201" width="58" height="1" fill="#c3c3c3"/>
<text x="30" y="1191.2" font-family='"Liberation Sans", sans-serif' font-size="16.3" fill="#666" font-weight="400" letter-spacing="0" text-anchor="middle" font-style="normal" >26</text>
<rect x="0" y="1235" width="58" height="1" fill="#c3c3c3"/>
<text x="30" y="1225.2" font-family='"Liberation Sans", sans-serif' font-size="16.3" fill="#666" font-weight="400" letter-spacing="0" text-anchor="middle" font-style="normal" >27</text>
<rect x="0" y="1267" width="58" height="1" fill="#c3c3c3"/>
<text x="30" y="1258.2" font-family='"Liberation Sans", sans-serif' font-size="16.3" fill="#666" font-weight="400" letter-spacing="0" text-anchor="middle" font-style="normal" >28</text>
<rect x="0" y="1313" width="58" height="1" fill="#c3c3c3"/>
<text x="30" y="1297.2" font-family='"Liberation Sans", sans-serif' font-size="16.3" fill="#666" font-weight="400" letter-spacing="0" text-anchor="middle" font-style="normal" >29</text>
<rect x="0" y="1359" width="58" height="1" fill="#c3c3c3"/>
<text x="30" y="1343.2" font-family='"Liberation Sans", sans-serif' font-size="16.3" fill="#666" font-weight="400" letter-spacing="0" text-anchor="middle" font-style="normal" >30</text>
<rect x="0" y="1391" width="58" height="1" fill="#c3c3c3"/>
<text x="30" y="1382.2" font-family='"Liberation Sans", sans-serif' font-size="16.3" fill="#666" font-weight="400" letter-spacing="0" text-anchor="middle" font-style="normal" >31</text>
<rect x="0" y="1423" width="58" height="1" fill="#c3c3c3"/>
<text x="30" y="1414.2" font-family='"Liberation Sans", sans-serif' font-size="16.3" fill="#666" font-weight="400" letter-spacing="0" text-anchor="middle" font-style="normal" >32</text>
<rect x="0" y="1455" width="58" height="1" fill="#c3c3c3"/>
<text x="30" y="1446.2" font-family='"Liberation Sans", sans-serif' font-size="16.3" fill="#666" font-weight="400" letter-spacing="0" text-anchor="middle" font-style="normal" >33</text>
<rect x="59.5" y="353" width="1.5" height="1100" fill="#ffffff"/>
<rect x="2452" y="321" width="8" height="599" fill="#b3b3b3" stroke="#9a9a9a" stroke-width="1"/>
<rect x="6" y="1434" width="1758" height="7" fill="#b3b3b3" stroke="#9a9a9a" stroke-width="1"/>
</g>
<rect x="0" y="1447" width="2466" height="2" fill="#5b7bd5"/>
<rect x="0" y="1449" width="2466" height="61" fill="#c9c9c9"/>
<rect x="0" y="1510" width="2466" height="2" fill="#b5b5b5"/>
<path d="M-4.799999999999983,1449 L225.4,1449 L206.4,1502 Q203.4,1510 193.4,1510 L27.200000000000017,1510 Q17.200000000000017,1510 14.200000000000017,1502 Z" fill="#e4e4e4" stroke="#cfcfcf" stroke-width="0.8"/>
<path d="M209.4,1449 L439.6,1449 L420.6,1502 Q417.6,1510 407.6,1510 L241.4,1510 Q231.4,1510 228.4,1502 Z" fill="#e4e4e4" stroke="#cfcfcf" stroke-width="0.8"/>
<path d="M423.6,1449 L653.8,1449 L634.8,1502 Q631.8,1510 621.8,1510 L455.6,1510 Q445.6,1510 442.6,1502 Z" fill="#e4e4e4" stroke="#cfcfcf" stroke-width="0.8"/>
<path d="M637.8,1449 L868.0,1449 L849.0,1502 Q846.0,1510 836.0,1510 L669.8,1510 Q659.8,1510 656.8,1502 Z" fill="#e4e4e4" stroke="#cfcfcf" stroke-width="0.8"/>
<path d="M851.9999999999999,1449 L1082.1999999999998,1449 L1063.1999999999998,1502 Q1060.1999999999998,1510 1050.1999999999998,1510 L883.9999999999999,1510 Q873.9999999999999,1510 870.9999999999999,1502 Z" fill="#e4e4e4" stroke="#cfcfcf" stroke-width="0.8"/>
<path d="M1066.2,1449 L1296.4,1449 L1277.4,1502 Q1274.4,1510 1264.4,1510 L1098.2,1510 Q1088.2,1510 1085.2,1502 Z" fill="#e4e4e4" stroke="#cfcfcf" stroke-width="0.8"/>
<path d="M1280.4,1449 L1510.6000000000001,1449 L1491.6000000000001,1502 Q1488.6000000000001,1510 1478.6000000000001,1510 L1312.4,1510 Q1302.4,1510 1299.4,1502 Z" fill="#e4e4e4" stroke="#cfcfcf" stroke-width="0.8"/>
<path d="M1494.6,1449 L1724.8,1449 L1705.8,1502 Q1702.8,1510 1692.8,1510 L1526.6,1510 Q1516.6,1510 1513.6,1502 Z" fill="#e4e4e4" stroke="#cfcfcf" stroke-width="0.8"/>
<path d="M1708.8,1449 L1939.0,1449 L1920.0,1502 Q1917.0,1510 1907.0,1510 L1740.8,1510 Q1730.8,1510 1727.8,1502 Z" fill="#e4e4e4" stroke="#cfcfcf" stroke-width="0.8"/>
<path d="M1923.0,1449 L2153.2,1449 L2134.2,1502 Q2131.2,1510 2121.2,1510 L1955.0,1510 Q1945.0,1510 1942.0,1502 Z" fill="#e4e4e4" stroke="#cfcfcf" stroke-width="0.8"/>
<text x="105.30000000000001" y="1490" font-family='"Liberation Sans", sans-serif' font-size="27" fill="#999" font-weight="400" letter-spacing="0.2" text-anchor="middle" font-style="normal" >37нед.2014</text>
<text x="319.5" y="1490" font-family='"Liberation Sans", sans-serif' font-size="27" fill="#999" font-weight="400" letter-spacing="0.2" text-anchor="middle" font-style="normal" >38нед.2014</text>
<text x="533.7" y="1490" font-family='"Liberation Sans", sans-serif' font-size="27" fill="#999" font-weight="400" letter-spacing="0.2" text-anchor="middle" font-style="normal" >39нед.2014</text>
<text x="747.9" y="1490" font-family='"Liberation Sans", sans-serif' font-size="27" fill="#999" font-weight="400" letter-spacing="0.2" text-anchor="middle" font-style="normal" >40нед.2014</text>
<text x="962.0999999999999" y="1490" font-family='"Liberation Sans", sans-serif' font-size="27" fill="#999" font-weight="400" letter-spacing="0.2" text-anchor="middle" font-style="normal" >41нед.2014</text>
<text x="1176.3" y="1490" font-family='"Liberation Sans", sans-serif' font-size="27" fill="#999" font-weight="400" letter-spacing="0.2" text-anchor="middle" font-style="normal" >42нед.2014</text>
<text x="1390.5" y="1490" font-family='"Liberation Sans", sans-serif' font-size="27" fill="#999" font-weight="400" letter-spacing="0.2" text-anchor="middle" font-style="normal" >43нед.2014</text>
<text x="1604.6999999999998" y="1490" font-family='"Liberation Sans", sans-serif' font-size="27" fill="#999" font-weight="400" letter-spacing="0.2" text-anchor="middle" font-style="normal" >44нед.2014</text>
<text x="1818.8999999999999" y="1490" font-family='"Liberation Sans", sans-serif' font-size="27" fill="#999" font-weight="400" letter-spacing="0.2" text-anchor="middle" font-style="normal" >45нед.2014</text>
<path d="M2137.2,1449 L2367.3999999999996,1449 L2348.3999999999996,1502 Q2345.3999999999996,1510 2335.3999999999996,1510 L2169.2,1510 Q2159.2,1510 2156.2,1502 Z" fill="#e4e4e4" stroke="#cfcfcf" stroke-width="0.8"/>
<text x="2247.2999999999997" y="1490" font-family='"Liberation Sans", sans-serif' font-size="27" fill="#999" font-weight="400" letter-spacing="0.2" text-anchor="middle" font-style="normal" >47нед.2014</text>
<path d="M2357,1449 L2466,1449 L2452,1500 Q2449,1510 2439,1510 L2383,1510 Q2374,1510 2371,1500 Z" fill="#ffffff"/>
<rect x="2394" y="1478.5" width="25" height="4" fill="#5b7bd5"/><rect x="2404.5" y="1468" width="4" height="25" fill="#5b7bd5"/>
<path d="M1920,1449 L2143,1449 L2131,1499 Q2128,1510 2117,1510 L1950,1510 Q1939,1510 1936,1499 Z" fill="#6281d6"/>
<text x="2032" y="1490" font-family='"Liberation Sans", sans-serif' font-size="27" fill="#ffffff" font-weight="700" letter-spacing="0" text-anchor="middle" font-style="normal" >46нед.2014</text>
<rect x="0" y="1449" width="128" height="61" fill="#c9c9c9"/>
<rect x="44" y="1462" width="40" height="32" rx="2" fill="#5a5a5a"/>
<rect x="47.5" y="1465" width="10" height="7.5" fill="#f0f0f0"/>
<rect x="47.5" y="1474" width="10" height="7.5" fill="#f0f0f0"/>
<rect x="47.5" y="1483" width="10" height="7.5" fill="#f0f0f0"/>
<rect x="59.0" y="1465" width="10" height="7.5" fill="#f0f0f0"/>
<rect x="59.0" y="1474" width="10" height="7.5" fill="#f0f0f0"/>
<rect x="59.0" y="1483" width="10" height="7.5" fill="#f0f0f0"/>
<rect x="70.5" y="1465" width="10" height="7.5" fill="#f0f0f0"/>
<rect x="70.5" y="1474" width="10" height="7.5" fill="#f0f0f0"/>
<rect x="70.5" y="1483" width="10" height="7.5" fill="#f0f0f0"/>
<path d="M48,1494 L80,1494 L77,1498 L51,1498 Z" fill="#5a5a5a"/>
<rect x="0" y="1512" width="2560" height="88" fill="#ffffff"/>
<rect x="43" y="1526" width="60" height="60" rx="6" fill="#fff" stroke="#adadad" stroke-width="2"/>
<text x="51" y="1576" font-family='"Liberation Serif", serif' font-size="30" fill="#d4d4d4" font-weight="400" letter-spacing="0" text-anchor="start" font-style="italic" stroke="#d4d4d4" stroke-width="1.2">f</text>
<text x="62" y="1576" font-family='"Liberation Serif", serif' font-size="17" fill="#d4d4d4" font-weight="400" letter-spacing="0" text-anchor="start" font-style="italic" stroke="#d4d4d4" stroke-width="1">(x)</text>
<path d="M76,1534.5 L93,1534.5 L85.5,1546 L95.5,1546 L78.5,1566 L83,1551 L75.5,1551 Z" fill="#d4d4d4"/>
<rect x="1848" y="1527" width="528" height="57" rx="7" fill="#fff" stroke="#b3b3b3" stroke-width="2"/>
<text x="2086" y="1566" font-family='"Liberation Sans", sans-serif' font-size="27" fill="#333" font-weight="400" letter-spacing="0" text-anchor="middle" font-style="normal" >56%</text>
<polygon points="2342.00,1550.00 2347.00,1550.00 2351.00,1554.60 2355.00,1550.00 2360.00,1550.00 2352.50,1560.00 2349.50,1560.00" fill="#444"/>
<circle cx="2424.2" cy="1551" r="16" fill="none" stroke="#555" stroke-width="3.2"/>
<path d="M2436.2,1563 L2441.2,1568" stroke="#777" stroke-width="2.6"/>
<path d="M2441.2,1568 L2450.2,1577" stroke="#555" stroke-width="7"/>
<rect x="2415.7" y="1549" width="17" height="3.6" fill="#555"/>
<circle cx="2511.3" cy="1551" r="16" fill="none" stroke="#555" stroke-width="3.2"/>
<path d="M2523.3,1563 L2528.3,1568" stroke="#777" stroke-width="2.6"/>
<path d="M2528.3,1568 L2537.3,1577" stroke="#555" stroke-width="7"/>
<rect x="2502.8" y="1549" width="17" height="3.6" fill="#555"/>
<rect x="2509.5" y="1542.4" width="3.6" height="17" fill="#555"/>
<rect x="2466" y="223" width="94" height="1287" fill="#e0e0e0"/>
<rect x="2466" y="223" width="3" height="1287" fill="#bcbcbc"/>
<path d="M2469,224 L2538,239 Q2547,241 2547,250 L2547,607 Q2547,614 2539,616 L2469,630 Z" fill="#f9f9f9" stroke="#cbcbcb" stroke-width="1.5"/>
<rect x="2504" y="259" width="7" height="37" fill="#5e5e5e"/><rect x="2489" y="274" width="37" height="7" fill="#5e5e5e"/>
<path d="M2488,360 L2525,360 L2525,394.5 L2488,394.5 Z M2491.2,363.2 L2491.2,391.3 L2521.8,391.3 L2521.8,363.2 Z" fill="#5e5e5e" fill-rule="evenodd"/>
<rect x="2499.6" y="361" width="2.6" height="33" fill="#5e5e5e"/><rect x="2511.2" y="361" width="2.3" height="33" fill="#5e5e5e"/>
<rect x="2489" y="370.1" width="35" height="2.7" fill="#5e5e5e"/><rect x="2489" y="380.7" width="35" height="2.6" fill="#5e5e5e"/>
<path d="M2531.5,372 Q2534,370.5 2534,373.5 L2521,391.5 Q2519,393.5 2517,391.5 Q2515.5,389.5 2517.5,387.5 Z" fill="#5e5e5e" stroke="#f9f9f9" stroke-width="2.2"/>
<path d="M2531.5,372 Q2534,370.5 2534,373.5 L2521,391.5 Q2519,393.5 2517,391.5 Q2515.5,389.5 2517.5,387.5 Z" fill="#5e5e5e"/>
<path d="M2516,392 Q2518,399 2511,402 Q2504,404 2499.5,398.5 Q2504,399 2505,396 Q2506,391 2510,390 Q2514,389 2516,392 Z" fill="#5e5e5e" stroke="#f9f9f9" stroke-width="2.2"/>
<path d="M2516,392 Q2518,399 2511,402 Q2504,404 2499.5,398.5 Q2504,399 2505,396 Q2506,391 2510,390 Q2514,389 2516,392 Z" fill="#5e5e5e"/>
<path d="M2488,460 L2525,460 L2525,471.7 L2505,494.5 L2488,494.5 Z" fill="#5e5e5e"/>
<path d="M2526.6,472.8 L2535,481.3 L2517.6,497.7 L2509.1,489.7 Z" fill="#5e5e5e"/>
<path d="M2508,491 L2516,499 L2505.4,502.4 Z" fill="#5e5e5e"/>
<path d="M2508.5,490.5 L2516.5,498.5" stroke="#f9f9f9" stroke-width="1.3"/>
<rect x="2488.5" y="558.5" width="39" height="37" fill="none" stroke="#d2d2d2" stroke-width="3"/>
<rect x="2494" y="564" width="6" height="6" fill="#d2d2d2"/><rect x="2504" y="564" width="17" height="6" fill="#d2d2d2"/><rect x="2494" y="574" width="6" height="16" fill="#d2d2d2"/>
</svg></body></html>
